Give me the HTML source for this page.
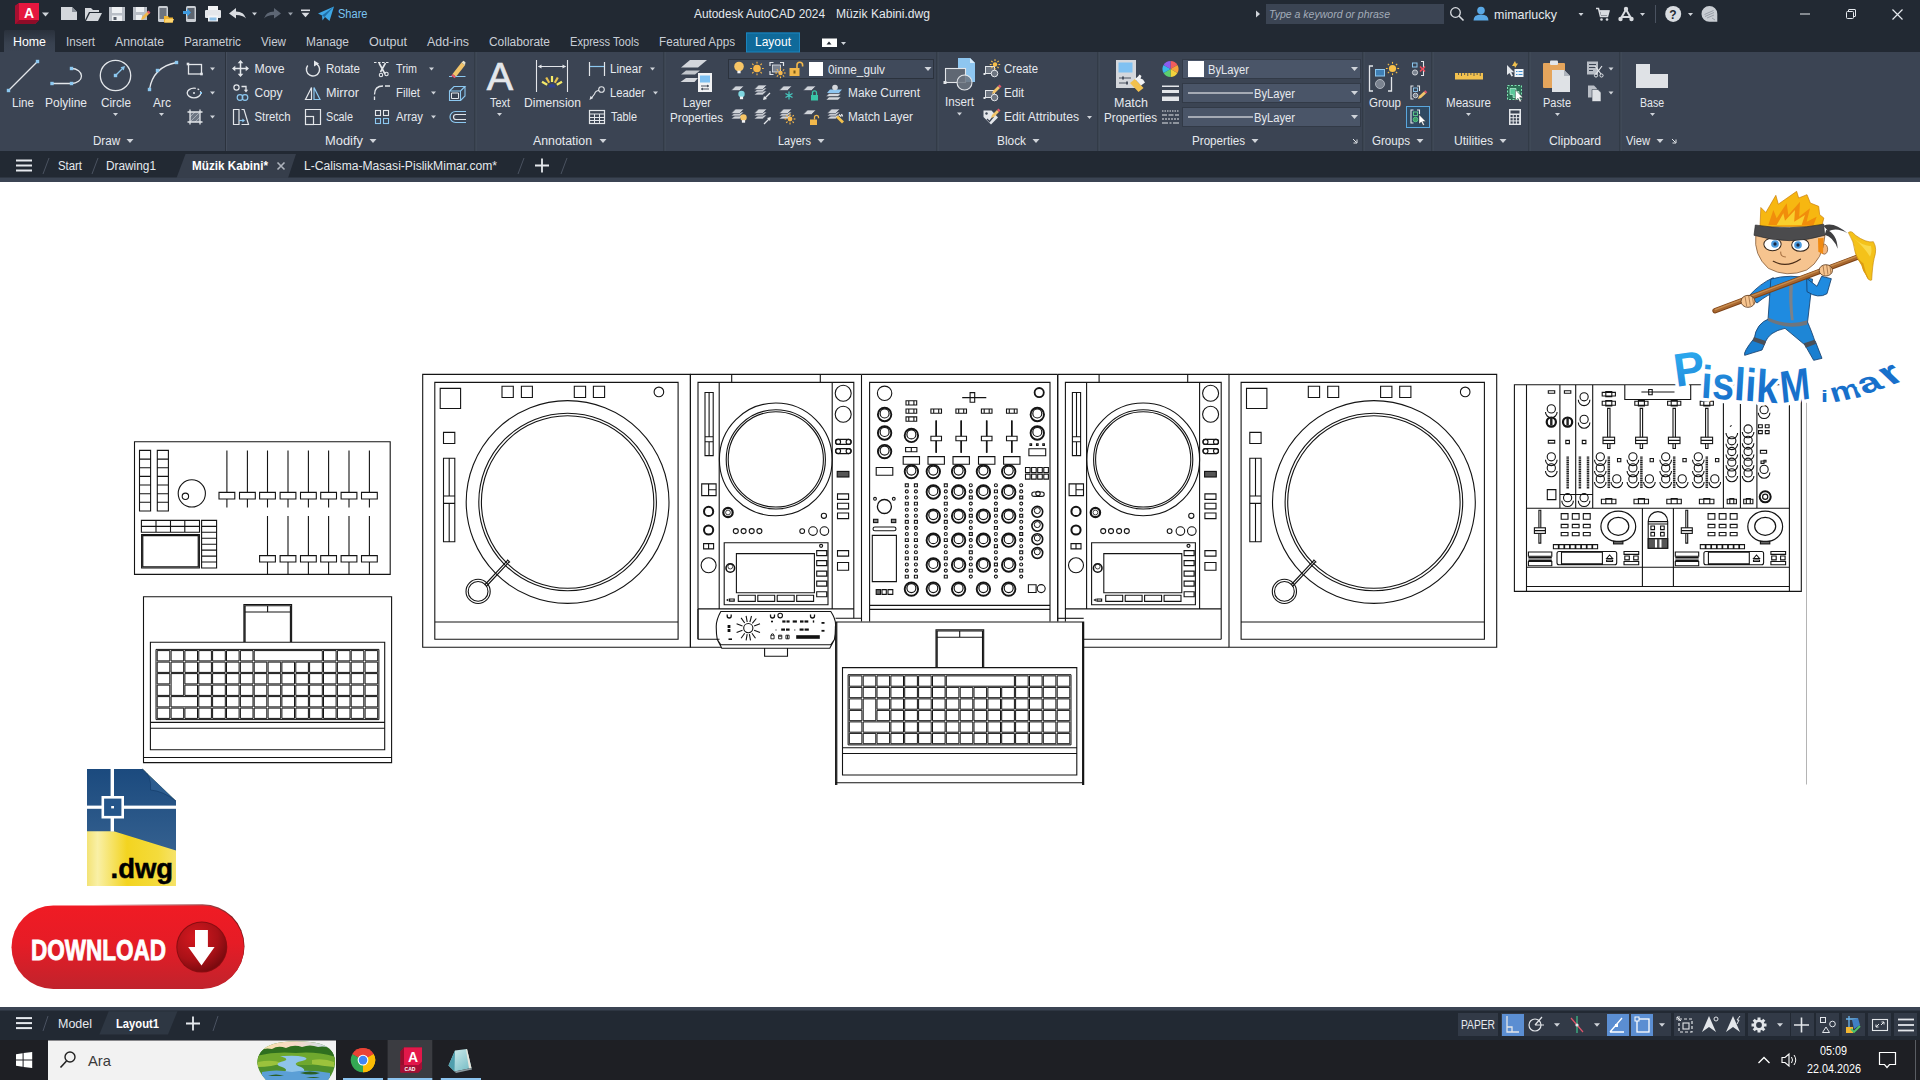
<!DOCTYPE html>
<html lang="tr"><head><meta charset="utf-8"><title>Autodesk AutoCAD 2024 - Müzik Kabini.dwg</title>
<style>
html,body{margin:0;padding:0;background:#fff;width:1920px;height:1080px;overflow:hidden}
svg{position:absolute;left:0;top:0;display:block}
text{font-family:"Liberation Sans",sans-serif;white-space:pre}
.t{font-size:12px;fill:#e6e9ee}
.d{fill:none;stroke:#000;stroke-width:1}
</style></head><body>
<svg width="1920" height="1080" viewBox="0 0 1920 1080">

<rect x="0" y="0" width="1920" height="182" fill="#222933"/>
<rect x="0" y="52" width="1920" height="99" fill="#3b4453"/>
<rect x="0" y="151" width="1920" height="27" fill="#222933"/>
<rect x="0" y="177.5" width="1920" height="4.5" fill="#3b4453"/>
<defs><linearGradient id="htg" x1="0" y1="0" x2="0" y2="1"><stop offset="0" stop-color="#2a313c"/><stop offset="0.600" stop-color="#38414f"/><stop offset="1" stop-color="#3b4453"/></linearGradient></defs><path d="M4,52V32q0,-2 2,-2H53q2,0 2,2V52z" fill="url(#htg)"/>
<rect x="746" y="32.5" width="54" height="19.5" fill="#0f6a9a"/>
<rect x="746.5" y="33" width="53" height="19" fill="none" stroke="#1b84bd" stroke-width="1"/>
<g><path d="M15,6l4,-3h20v17l-4,4h-20z" fill="#c8123c"/><path d="M19,3h20v17h-20z" fill="#e5173f"/><path d="M15,6l4,-3v17l-4,4z" fill="#a50f30"/><path d="M15,24l4,-4h20l-4,4z" fill="#8e0c28"/><text x="29" y="17.5" text-anchor="middle" style="font-size:14px;font-weight:bold;fill:#fff">A</text></g>
<path d="M42.0,12.5h7l-3.5,4z" fill="#d0d4da"/>
<path d="M61,7h11l5,5v8h-16z" fill="#d4d7dc"/><path d="M72,7v5h5z" fill="#8a9099"/>
<path d="M85,8h6l2,2h6v2h-10l-4,8z" fill="#d4d7dc"/><path d="M90,13h12l-4,8h-12z" fill="#d4d7dc"/>
<path d="M109,7h16v14h-16z" fill="#b9bec6"/><rect x="112" y="7" width="10" height="6" fill="#eef0f3"/><rect x="112" y="15.5" width="10" height="5.5" fill="#eef0f3"/><rect x="113.5" y="17" width="3" height="3" fill="#555c68"/>
<path d="M133,7h14v13h-14z" fill="#b9bec6"/><rect x="136" y="7" width="8" height="5" fill="#eef0f3"/><rect x="136" y="15" width="6" height="5" fill="#eef0f3"/><path d="M141,20l1,-3l6,-6l2,2l-6,6z" fill="#f0b64a"/><path d="M147,12l1.5,-1.5l2,2l-1.5,1.5z" fill="#e0566b"/>
<rect x="158" y="6" width="10" height="16" rx="1.5" fill="#c9cdd3"/><rect x="159.5" y="8" width="7" height="11" fill="#6d747f"/><path d="M164,16h4l1,1.5h4v5h-9z" fill="#f2b632"/><path d="M165.5,19h8.5l-1.5,3.5h-8z" fill="#ffd670"/>
<rect x="186" y="6" width="10" height="16" rx="1.5" fill="#c9cdd3"/><rect x="187.500" y="8" width="7" height="11" fill="#5d6570"/><path d="M183,11h4v-2.500l4,4l-4,4v-2.500h-4z" fill="#3f9be0"/>
<rect x="208" y="6" width="10" height="5" fill="#f3f4f6"/><rect x="205" y="10" width="16" height="8" rx="1" fill="#e4e6ea"/><rect x="208" y="15.500" width="10" height="6" fill="#f3f4f6"/><rect x="209.500" y="17.500" width="7" height="3" fill="#8ec0e8"/>
<path d="M229,13.500l7,-5.500v3.500q8,0 10,7q-3,-3.500 -10,-3.500v3.500z" fill="#d9dce1"/>
<path d="M252.0,12.5h5l-2.5,3z" fill="#d0d4da"/>
<path d="M281,13.500l-7,-5.500v3.500q-8,0 -10,7q3,-3.500 10,-3.500v3.500z" fill="#5d6674"/>
<path d="M288.0,12.5h5l-2.5,3z" fill="#9aa1ab"/>
<rect x="301" y="9.500" width="9" height="1.600" fill="#d9dce1"/>
<path d="M301.5,12.75h8l-4.0,4.5z" fill="#d9dce1"/>
<path d="M318,13.500l16,-7l-4.500,14.500l-4.500,-4l-2.500,3.500l-0.500,-5z" fill="#3ea7e6"/><path d="M322,15.500l12,-9l-9.500,10.500z" fill="#1f6fa8"/>
<text x="338" y="18.2" class="t" style="fill:#79c3f1;font-size:12px" textLength="29.500" lengthAdjust="spacingAndGlyphs">Share</text>
<text x="694" y="17.8" class="t" textLength="131" lengthAdjust="spacingAndGlyphs">Autodesk AutoCAD 2024</text>
<text x="836" y="17.8" class="t" textLength="94" lengthAdjust="spacingAndGlyphs">Müzik Kabini.dwg</text>
<path d="M1256,10.500l4,3.500l-4,3.500z" fill="#d0d4da"/>
<rect x="1266" y="4" width="178" height="20" fill="#3b4453"/>
<text x="1269" y="18" class="t" style="font-style:italic;fill:#a3acb9;font-size:11px" textLength="121" lengthAdjust="spacingAndGlyphs">Type a keyword or phrase</text>
<circle cx="1455.500" cy="12.500" r="4.800" fill="none" stroke="#d9dce1" stroke-width="1.300"/><path d="M1459,16l4.500,4.500" stroke="#d9dce1" stroke-width="1.600"/>
<circle cx="1481" cy="10.500" r="3.800" fill="#5aa9e6"/><path d="M1473.500,20.500q0,-6 7.500,-6t7.500,6z" fill="#5aa9e6"/>
<text x="1494" y="18.5" class="t" style="font-size:13px" textLength="63" lengthAdjust="spacingAndGlyphs">mimarlucky</text>
<path d="M1578.5,13.0h5l-2.5,3z" fill="#d0d4da"/>
<path d="M1596,8.500h2.500l2,8h7l1.500,-5.500h-9.500" fill="none" stroke="#d9dce1" stroke-width="1.500"/><circle cx="1601.500" cy="19.500" r="1.300" fill="#d9dce1"/><circle cx="1607" cy="19.500" r="1.300" fill="#d9dce1"/><path d="M1600,10.500h9l-1.200,5h-6.600z" fill="#d9dce1"/>
<path d="M1626,9.500l-5.500,9.500M1626,9.500l5.500,9.500M1621.500,17h9" stroke="#d9dce1" stroke-width="2" fill="none"/><circle cx="1626" cy="9" r="2.200" fill="#d9dce1"/><circle cx="1620.500" cy="19" r="2.200" fill="#d9dce1"/><circle cx="1631.500" cy="19" r="2.200" fill="#d9dce1"/>
<path d="M1640.0,13.0h5l-2.5,3z" fill="#d0d4da"/>
<rect x="1655" y="5" width="1" height="18" fill="#4a5260"/>
<circle cx="1673.200" cy="13.900" r="8" fill="#d9dce1"/><text x="1673" y="18.500" text-anchor="middle" style="font-size:12px;font-weight:bold;fill:#222933">?</text>
<path d="M1688.0,13.0h5l-2.5,3z" fill="#d0d4da"/>
<path d="M1717.300,13.900a7.900,7.900 0 1 0 -7.900,7.900h7.900z" fill="#c9cdd3"/><path d="M1704.500,14.500l9,-4M1705,16.500l9,-4M1707,18l7,-3M1712,18l3,2" stroke="#8b929c" stroke-width="0.800"/>
<rect x="1800" y="13.500" width="10" height="1" fill="#e6e9ee"/>
<rect x="1846.500" y="11.500" width="7" height="7" rx="1" fill="none" stroke="#e6e9ee"/><path d="M1848.500,11.500v-1.500q0,-0.500 0.500,-0.500h6q0.500,0 0.500,0.500v6q0,0.500 -0.500,0.500h-1.500" fill="none" stroke="#e6e9ee"/>
<path d="M1892.500,9.500l10,10M1902.500,9.500l-10,10" stroke="#e6e9ee" stroke-width="1.200"/>
<text x="13" y="46" class="t" style="fill:#ffffff" textLength="33" lengthAdjust="spacingAndGlyphs">Home</text>
<text x="66" y="46" class="t" style="fill:#c9ced6" textLength="29" lengthAdjust="spacingAndGlyphs">Insert</text>
<text x="115" y="46" class="t" style="fill:#c9ced6" textLength="49" lengthAdjust="spacingAndGlyphs">Annotate</text>
<text x="184" y="46" class="t" style="fill:#c9ced6" textLength="57" lengthAdjust="spacingAndGlyphs">Parametric</text>
<text x="261" y="46" class="t" style="fill:#c9ced6" textLength="25" lengthAdjust="spacingAndGlyphs">View</text>
<text x="306" y="46" class="t" style="fill:#c9ced6" textLength="43" lengthAdjust="spacingAndGlyphs">Manage</text>
<text x="369" y="46" class="t" style="fill:#c9ced6" textLength="38" lengthAdjust="spacingAndGlyphs">Output</text>
<text x="427" y="46" class="t" style="fill:#c9ced6" textLength="42" lengthAdjust="spacingAndGlyphs">Add-ins</text>
<text x="489" y="46" class="t" style="fill:#c9ced6" textLength="61" lengthAdjust="spacingAndGlyphs">Collaborate</text>
<text x="570" y="46" class="t" style="fill:#c9ced6" textLength="69" lengthAdjust="spacingAndGlyphs">Express Tools</text>
<text x="659" y="46" class="t" style="fill:#c9ced6" textLength="76" lengthAdjust="spacingAndGlyphs">Featured Apps</text>
<text x="755" y="46" class="t" style="fill:#ffffff" textLength="36" lengthAdjust="spacingAndGlyphs">Layout</text>
<rect x="822" y="38.500" width="15" height="8.500" fill="#ffffff"/><path d="M826.500,44.500l2.500,-3l2.500,3z" fill="#222933"/>
<path d="M841.0,42.0h5l-2.5,3z" fill="#d0d4da"/>
<path d="M176.500,178L185.500,154H296L288,178z" fill="#363e4b"/>
<rect x="16" y="159.5" width="16" height="2" fill="#e6e9ee"/>
<rect x="16" y="164.5" width="16" height="2" fill="#e6e9ee"/>
<rect x="16" y="169.5" width="16" height="2" fill="#e6e9ee"/>
<path d="M43,174l6,-16" stroke="#4a5260" stroke-width="1"/>
<path d="M92,174l6,-16" stroke="#4a5260" stroke-width="1"/>
<path d="M518,174l6,-16" stroke="#4a5260" stroke-width="1"/>
<path d="M561,174l6,-16" stroke="#4a5260" stroke-width="1"/>
<text x="58" y="170" class="t" textLength="24" lengthAdjust="spacingAndGlyphs">Start</text>
<text x="106" y="170" class="t" textLength="50" lengthAdjust="spacingAndGlyphs">Drawing1</text>
<text x="192" y="170" class="t" style="font-weight:bold;fill:#fff" textLength="76" lengthAdjust="spacingAndGlyphs">Müzik Kabini*</text>
<path d="M277.500,162.500l7,7M284.500,162.500l-7,7" stroke="#aeb4bd" stroke-width="1.600"/>
<text x="304" y="170" class="t" textLength="193" lengthAdjust="spacingAndGlyphs">L-Calisma-Masasi-PislikMimar.com*</text>
<path d="M535,165.500h14M542,158.500v14" stroke="#e6e9ee" stroke-width="1.800"/>
<path d="M8.500,90.500L37.500,61.500" stroke="#e3e6ea" stroke-width="1.300"/><rect x="6.8" y="88.8" width="3.4" height="3.4" fill="#8cc8f0"/><rect x="35.8" y="59.8" width="3.4" height="3.4" fill="#8cc8f0"/>
<path d="M52,83.500H71.500M71.500,68.500a10,7.500 0 0 1 0,15" stroke="#e3e6ea" stroke-width="1.300" fill="none"/><rect x="50.3" y="81.8" width="3.4" height="3.4" fill="#8cc8f0"/><rect x="69.8" y="81.8" width="3.4" height="3.4" fill="#8cc8f0"/><rect x="69.8" y="66.8" width="3.4" height="3.4" fill="#8cc8f0"/>
<circle cx="115.500" cy="75.500" r="15.200" fill="none" stroke="#e3e6ea" stroke-width="1.300"/><path d="M115.500,75.500L123.500,67.500" stroke="#8cc8f0" stroke-width="1.300"/><path d="M125,66l-4.500,1.200l3.300,3.300z" fill="#8cc8f0"/><rect x="113.8" y="73.8" width="3.4" height="3.4" fill="#8cc8f0"/>
<path d="M149.500,89.500Q153,67 176.500,62.500" stroke="#e3e6ea" stroke-width="1.300" fill="none"/><rect x="147.8" y="87.8" width="3.4" height="3.4" fill="#8cc8f0"/><rect x="155.8" y="68.8" width="3.4" height="3.4" fill="#8cc8f0"/><rect x="174.8" y="60.8" width="3.4" height="3.4" fill="#8cc8f0"/>
<rect x="188.500" y="64.500" width="13" height="9.500" fill="none" stroke="#e3e6ea" stroke-width="1.300"/><rect x="186.7" y="62.7" width="2.6" height="2.6" fill="#e3e6ea"/><rect x="200.2" y="72.7" width="2.6" height="2.6" fill="#e3e6ea"/>
<path d="M194,88.200a6.800,4.800 0 1 0 6.800,4.800" fill="none" stroke="#e3e6ea" stroke-width="1.300"/><path d="M194,88.200a6.800,4.800 0 0 1 6.800,4.800" fill="none" stroke="#e3e6ea" stroke-width="1.300" stroke-dasharray="1.800 1.800"/><circle cx="194" cy="93" r="1" fill="#e3e6ea"/><rect x="200.0" y="92.0" width="2" height="2" fill="#8cc8f0"/>
<rect x="190" y="112" width="10" height="10" fill="#6d7683"/><path d="M190,117l5,-5M190,122l10,-10M195,122l5,-5" stroke="#aab1bb" stroke-width="0.900"/><path d="M187.500,112h15M187.500,122h15M190,109.500v15M200,109.500v15" stroke="#e3e6ea" stroke-width="1.300"/>
<path d="M210.0,67.5h5l-2.5,3z" fill="#d0d4da"/>
<path d="M210.0,91.5h5l-2.5,3z" fill="#d0d4da"/>
<path d="M210.0,115.5h5l-2.5,3z" fill="#d0d4da"/>
<text x="12" y="106.5" class="t" textLength="22" lengthAdjust="spacingAndGlyphs" >Line</text>
<text x="45" y="106.5" class="t" textLength="42" lengthAdjust="spacingAndGlyphs" >Polyline</text>
<text x="101" y="106.5" class="t" textLength="30" lengthAdjust="spacingAndGlyphs" >Circle</text>
<text x="153" y="106.5" class="t" textLength="18" lengthAdjust="spacingAndGlyphs" >Arc</text>
<path d="M113.0,113.0h5l-2.5,3z" fill="#d0d4da"/>
<path d="M159.0,113.0h5l-2.5,3z" fill="#d0d4da"/>
<text x="93" y="144.5" class="t" textLength="27" lengthAdjust="spacingAndGlyphs" >Draw</text>
<path d="M126.5,139.0h7l-3.5,4z" fill="#d0d4da"/>
<rect x="225" y="52" width="1" height="99" fill="#2b323d"/><rect x="226" y="52" width="1" height="99" fill="#454e5d"/>
<path d="M233.500,68.500h14M240.500,61.500v14" stroke="#e3e6ea" stroke-width="1.500"/><path d="M240.500,60l-2.800,3.300h5.600zM240.500,77l-2.800,-3.300h5.600zM232,68.500l3.300,-2.800v5.600zM249,68.500l-3.300,-2.800v5.600z" fill="#e3e6ea"/>
<text x="254.5" y="72.5" class="t" textLength="30" lengthAdjust="spacingAndGlyphs" >Move</text>
<circle cx="236.500" cy="87.500" r="2.600" fill="none" stroke="#e3e6ea" stroke-width="1.200"/><path d="M241.500,86.500h4.500v4" stroke="#e3e6ea" stroke-width="1.300" fill="none"/><path d="M246,92.500l-2.200,-2.700h4.400z" fill="#e3e6ea"/><circle cx="240" cy="97.500" r="2.800" fill="none" stroke="#8cc8f0" stroke-width="1.200"/><circle cx="245" cy="97.500" r="2.800" fill="none" stroke="#8cc8f0" stroke-width="1.200"/>
<text x="254.5" y="96.5" class="t" textLength="28" lengthAdjust="spacingAndGlyphs" >Copy</text>
<path d="M233.500,109.500h5.500v15h-5.500zM241.500,109.500h2.500l4.500,15h-7" stroke="#e3e6ea" stroke-width="1.200" fill="none"/><path d="M239,120.500h4" stroke="#8cc8f0" stroke-width="1.200"/><path d="M245,120.500l-2.600,-2v4z" fill="#8cc8f0"/>
<text x="254.5" y="120.5" class="t" textLength="36" lengthAdjust="spacingAndGlyphs" >Stretch</text>
<path d="M314.500,63a6.600,6.600 0 1 1 -6.800,2.500" stroke="#e3e6ea" stroke-width="1.400" fill="none"/><path d="M319,63.500l-5,-3v6z" fill="#e3e6ea"/>
<text x="326" y="72.5" class="t" textLength="34" lengthAdjust="spacingAndGlyphs" >Rotate</text>
<path d="M311.500,87.500v12h-6z" stroke="#e3e6ea" stroke-width="1.200" fill="none"/><path d="M314,87.500v12h6z" stroke="#8cc8f0" stroke-width="1.200" fill="none"/>
<text x="326" y="96.5" class="t" textLength="33" lengthAdjust="spacingAndGlyphs" >Mirror</text>
<path d="M305.500,116v-6.500h15v15h-6.500" stroke="#e3e6ea" stroke-width="1.200" fill="none"/><rect x="305.500" y="116.500" width="8" height="8" stroke="#e3e6ea" stroke-width="1.200" fill="none"/>
<text x="326" y="120.5" class="t" textLength="27" lengthAdjust="spacingAndGlyphs" >Scale</text>
<path d="M374,62.500h16" stroke="#e3e6ea" stroke-width="1.200" stroke-dasharray="2.500 1.500"/><path d="M379,63l6,11M385.500,63l-5,9" stroke="#e3e6ea" stroke-width="1.600"/><circle cx="381" cy="75" r="1.700" fill="none" stroke="#e3e6ea" stroke-width="1.100"/><circle cx="386.500" cy="74" r="1.700" fill="none" stroke="#e3e6ea" stroke-width="1.100"/>
<text x="396" y="72.5" class="t" textLength="21" lengthAdjust="spacingAndGlyphs" >Trim</text>
<path d="M429.0,67.5h5l-2.5,3z" fill="#d0d4da"/>
<path d="M374.500,100v-3.500M374.500,94.500q0,-8.500 8.500,-8.500M385,86h5" stroke="#e3e6ea" stroke-width="1.300" fill="none"/>
<text x="396" y="96.5" class="t" textLength="24" lengthAdjust="spacingAndGlyphs" >Fillet</text>
<path d="M431.0,91.5h5l-2.5,3z" fill="#d0d4da"/>
<rect x="375.5" y="110.5" width="5" height="5" fill="none" stroke="#e3e6ea" stroke-width="1.100"/>
<rect x="383.5" y="110.5" width="5" height="5" fill="none" stroke="#e3e6ea" stroke-width="1.100"/>
<rect x="375.5" y="118.5" width="5" height="5" fill="none" stroke="#8cc8f0" stroke-width="1.100"/>
<rect x="383.5" y="118.5" width="5" height="5" fill="none" stroke="#8cc8f0" stroke-width="1.100"/>
<text x="396" y="120.5" class="t" textLength="27" lengthAdjust="spacingAndGlyphs" >Array</text>
<path d="M431.0,115.5h5l-2.5,3z" fill="#d0d4da"/>
<path d="M452.500,74l9,-11.500l3.500,2.700l-9,11.500z" fill="#f2c46a"/><path d="M461.500,62.500l2,-1.700l2,1.500l-0.500,2.900z" fill="#e9e2c9"/><path d="M452.500,74l3.500,2.700l-1.300,1.500l-3.500,-2.500z" fill="#e4566c"/><path d="M449,76.500h3M455.500,76.500h10" stroke="#8cc8f0" stroke-width="1"/>
<path d="M449.500,91h11v9.500h-11zM449.500,91l4.500,-4.500h11l-4.500,4.500M465,86.500v9.500l-4.500,4.500" stroke="#8cc8f0" stroke-width="1.100" fill="none"/><path d="M451.500,93h7v5.500h-7z" stroke="#e3e6ea" stroke-width="1" fill="none"/>
<path d="M466,111.500h-10.500a5.500,5.500 0 0 0 0,11h10.500" stroke="#8cc8f0" stroke-width="1.200" fill="none"/><path d="M466,114.500h-10a2.500,2.500 0 0 0 0,5h10" stroke="#e3e6ea" stroke-width="1.200" fill="none"/>
<text x="325" y="144.5" class="t" textLength="38" lengthAdjust="spacingAndGlyphs" >Modify</text>
<path d="M369.5,139.0h7l-3.5,4z" fill="#d0d4da"/>
<rect x="474.5" y="52" width="1" height="99" fill="#2b323d"/><rect x="475.5" y="52" width="1" height="99" fill="#454e5d"/>
<text x="500" y="90" text-anchor="middle" style="font-size:39.500px;fill:#e3e6ea;stroke:#e3e6ea;stroke-width:0.7px">A</text>
<text x="490" y="106.5" class="t" textLength="20" lengthAdjust="spacingAndGlyphs" >Text</text>
<path d="M497.0,113.0h5l-2.5,3z" fill="#d0d4da"/>
<path d="M536.500,60v32M567.500,60v32M538.500,66.500h27" stroke="#e3e6ea" stroke-width="1.100"/><path d="M538,66.500l3.500,-2v4zM566,66.500l-3.500,-2v4z" fill="#e3e6ea"/>
<path d="M547.2,84.8L542.0,81.8" stroke="#f4e96a" stroke-width="2.200"/>
<path d="M549.2,82.7L546.2,77.5" stroke="#e8c24e" stroke-width="2.200"/>
<path d="M552.0,82.0L552.0,76.0" stroke="#f4e96a" stroke-width="2.200"/>
<path d="M554.8,82.7L557.8,77.5" stroke="#e8c24e" stroke-width="2.200"/>
<path d="M556.8,84.8L562.0,81.8" stroke="#f4e96a" stroke-width="2.200"/>
<path d="M548.500,87.500a3.500,3.500 0 0 1 7,0z" fill="#2f3f8f"/>
<text x="524" y="106.5" class="t" textLength="57" lengthAdjust="spacingAndGlyphs" >Dimension</text>
<path d="M589.500,62v14M604.500,62v14" stroke="#e3e6ea" stroke-width="1.200"/><path d="M590,66.500h14" stroke="#8cc8f0" stroke-width="1.200"/>
<text x="610" y="72.5" class="t" textLength="32" lengthAdjust="spacingAndGlyphs" >Linear</text>
<path d="M650.0,67.5h5l-2.5,3z" fill="#d0d4da"/>
<circle cx="601.500" cy="89.500" r="2.800" fill="none" stroke="#e3e6ea" stroke-width="1.100"/><path d="M599,90.500q-3.500,0 -4.500,3.500l-3,4" stroke="#e3e6ea" stroke-width="1.100" fill="none"/><path d="M589.500,100l1,-4l2.700,2z" fill="#e3e6ea"/>
<text x="610" y="96.5" class="t" textLength="35" lengthAdjust="spacingAndGlyphs" >Leader</text>
<path d="M653.0,91.5h5l-2.5,3z" fill="#d0d4da"/>
<rect x="589.500" y="110.500" width="15" height="13" fill="none" stroke="#e3e6ea" stroke-width="1.200"/><path d="M589.500,114h15M589.500,117.500h15M589.500,120.500h15M594.500,114v9.500M599.500,114v9.500" stroke="#e3e6ea" stroke-width="1"/>
<text x="611" y="120.5" class="t" textLength="26" lengthAdjust="spacingAndGlyphs" >Table</text>
<text x="533" y="144.5" class="t" textLength="59" lengthAdjust="spacingAndGlyphs" >Annotation</text>
<path d="M599.5,139.0h7l-3.5,4z" fill="#d0d4da"/>
<rect x="663.5" y="52" width="1" height="99" fill="#2b323d"/><rect x="664.5" y="52" width="1" height="99" fill="#454e5d"/>
<path d="M690,60h17l-9,7.500h-17z" fill="#d4d7dc"/><path d="M686,70.500h14l-5,4h-14z" fill="#c2c6cc"/><path d="M686,78h12l-3.500,4h-14z" fill="#d4d7dc"/><rect x="698" y="73" width="14" height="19" fill="#f1f2f4"/><rect x="700" y="75.500" width="10" height="7" fill="#7fc1f2"/><path d="M701,86h8M701,89h8" stroke="#4a5260" stroke-width="1"/><path d="M709,86l-2,-1.500v3zM701,89l2,-1.500v3z" fill="#4a5260"/>
<text x="683" y="106.5" class="t" textLength="28" lengthAdjust="spacingAndGlyphs" >Layer</text>
<text x="670" y="121.5" class="t" textLength="53" lengthAdjust="spacingAndGlyphs" >Properties</text>
<rect x="728.500" y="59.500" width="205" height="19" fill="#404a5b" stroke="#2b323d"/>
<circle cx="739" cy="66.5" r="4.8" fill="#f7c566"/><rect x="737.4" y="70.7" width="3.2" height="2.6" fill="#f4f4f4"/>
<circle cx="757" cy="68.5" r="3.8" fill="#f7b84a"/><path d="M762.0,68.5L763.8,68.5" stroke="#f7b84a" stroke-width="1.1"/><path d="M760.5,72.0L761.8,73.3" stroke="#f7b84a" stroke-width="1.1"/><path d="M757.0,73.5L757.0,75.3" stroke="#f7b84a" stroke-width="1.1"/><path d="M753.5,72.0L752.2,73.3" stroke="#f7b84a" stroke-width="1.1"/><path d="M752.0,68.5L750.2,68.5" stroke="#f7b84a" stroke-width="1.1"/><path d="M753.5,65.0L752.2,63.7" stroke="#f7b84a" stroke-width="1.1"/><path d="M757.0,63.5L757.0,61.7" stroke="#f7b84a" stroke-width="1.1"/><path d="M760.5,65.0L761.8,63.7" stroke="#f7b84a" stroke-width="1.1"/>
<path d="M770,66v-3.500h3.500M780,62.500h3.500v3.500M770,71v3.500h3.500" stroke="#e3e6ea" stroke-width="1.200" fill="none"/><rect x="772.500" y="65" width="8" height="7" fill="#7b8390" stroke="#e3e6ea" stroke-width="0.800"/><circle cx="780.5" cy="73" r="2.2" fill="#f7b84a"/><path d="M783.9,73.0L785.7,73.0" stroke="#f7b84a" stroke-width="1.1"/><path d="M782.9,75.4L784.2,76.7" stroke="#f7b84a" stroke-width="1.1"/><path d="M780.5,76.4L780.5,78.2" stroke="#f7b84a" stroke-width="1.1"/><path d="M778.1,75.4L776.8,76.7" stroke="#f7b84a" stroke-width="1.1"/><path d="M777.1,73.0L775.3,73.0" stroke="#f7b84a" stroke-width="1.1"/><path d="M778.1,70.6L776.8,69.3" stroke="#f7b84a" stroke-width="1.1"/><path d="M780.5,69.6L780.5,67.8" stroke="#f7b84a" stroke-width="1.1"/><path d="M782.9,70.6L784.2,69.3" stroke="#f7b84a" stroke-width="1.1"/>
<rect x="789.500" y="68" width="10" height="8" fill="#f2b84b"/><path d="M797,68v-3a2.800,2.800 0 0 1 5.600,0v1.500" fill="none" stroke="#f2b84b" stroke-width="1.600"/><rect x="793.500" y="70.500" width="2" height="3" fill="#7a5a16"/>
<rect x="809" y="62" width="14" height="14" fill="#ffffff"/>
<text x="828" y="73.5" class="t" textLength="57" lengthAdjust="spacingAndGlyphs" style="font-size:12.500px">0inne_gulv</text>
<path d="M924.5,67.0h7l-3.5,4z" fill="#d0d4da"/>
<path d="M735.5,86.0h8.5l-4.5,4.6h-8.5z" fill="#cfd3d9" stroke="#3b4453" stroke-width="0.7"/><circle cx="741.5" cy="94" r="3.2" fill="#7fd6e0"/><rect x="739.9" y="96.60000000000001" width="3.2" height="2.6" fill="#f4f4f4"/>
<path d="M758.5,91.0h8.5l-4.5,4.0h-8.5z" fill="#cfd3d9" stroke="#3b4453" stroke-width="0.7"/><path d="M758.5,88.0h8.5l-4.5,4.0h-8.5z" fill="#cfd3d9" stroke="#3b4453" stroke-width="0.7"/><path d="M758.5,85.0h8.5l-4.5,4.6h-8.5z" fill="#cfd3d9" stroke="#3b4453" stroke-width="0.7"/><path d="M770,93l-6,6" stroke="#e3e6ea" stroke-width="1.200"/><path d="M763,100l1,-4l3,3z" fill="#e3e6ea"/>
<path d="M783.5,86.0h8.5l-4.5,4.6h-8.5z" fill="#cfd3d9" stroke="#3b4453" stroke-width="0.7"/><path d="M789,91.500v8M785.500,93.500l7,4M792.500,93.500l-7,4" stroke="#46c9c0" stroke-width="1.200"/>
<path d="M807.5,86.0h8.5l-4.5,4.6h-8.5z" fill="#cfd3d9" stroke="#3b4453" stroke-width="0.7"/><rect x="811" y="95" width="7" height="5.5" fill="#39c6a8"/><path d="M812.5,95v-2.200a2,2 0 0 1 4,0v2.200" fill="none" stroke="#39c6a8" stroke-width="1.3"/>
<path d="M829,93.500h12l-3,3h-12zM829,97h12l-3,3h-12z" fill="#d4d7dc" stroke="#3b4453" stroke-width="0.500"/><path d="M830,89.500h12l-3,3.500h-12z" fill="#8ec6f0"/><circle cx="835" cy="87.500" r="2.800" fill="#d4d7dc"/>
<text x="848" y="96.5" class="t" textLength="72" lengthAdjust="spacingAndGlyphs" >Make Current</text>
<path d="M735.5,115.0h8.5l-4.5,4.0h-8.5z" fill="#cfd3d9" stroke="#3b4453" stroke-width="0.7"/><path d="M735.5,112.0h8.5l-4.5,4.0h-8.5z" fill="#cfd3d9" stroke="#3b4453" stroke-width="0.7"/><path d="M735.5,109.0h8.5l-4.5,4.6h-8.5z" fill="#cfd3d9" stroke="#3b4453" stroke-width="0.7"/><circle cx="743.5" cy="117.5" r="3.2" fill="#f7c566"/><rect x="741.9" y="120.10000000000001" width="3.2" height="2.6" fill="#f4f4f4"/>
<path d="M758.5,115.0h8.5l-4.5,4.0h-8.5z" fill="#cfd3d9" stroke="#3b4453" stroke-width="0.7"/><path d="M758.5,112.0h8.5l-4.5,4.0h-8.5z" fill="#cfd3d9" stroke="#3b4453" stroke-width="0.7"/><path d="M758.5,109.0h8.5l-4.5,4.6h-8.5z" fill="#cfd3d9" stroke="#3b4453" stroke-width="0.7"/><path d="M764,124l6,-6" stroke="#e3e6ea" stroke-width="1.200"/><path d="M771,117l-4,1l3,3z" fill="#e3e6ea"/>
<path d="M783.5,115.0h8.5l-4.5,4.0h-8.5z" fill="#cfd3d9" stroke="#3b4453" stroke-width="0.7"/><path d="M783.5,112.0h8.5l-4.5,4.0h-8.5z" fill="#cfd3d9" stroke="#3b4453" stroke-width="0.7"/><path d="M783.5,109.0h8.5l-4.5,4.6h-8.5z" fill="#cfd3d9" stroke="#3b4453" stroke-width="0.7"/><circle cx="790" cy="119" r="2.4" fill="#f7b84a"/><path d="M793.6,119.0L795.4,119.0" stroke="#f7b84a" stroke-width="1.1"/><path d="M792.5,121.5L793.8,122.8" stroke="#f7b84a" stroke-width="1.1"/><path d="M790.0,122.6L790.0,124.4" stroke="#f7b84a" stroke-width="1.1"/><path d="M787.5,121.5L786.2,122.8" stroke="#f7b84a" stroke-width="1.1"/><path d="M786.4,119.0L784.6,119.0" stroke="#f7b84a" stroke-width="1.1"/><path d="M787.5,116.5L786.2,115.2" stroke="#f7b84a" stroke-width="1.1"/><path d="M790.0,115.4L790.0,113.6" stroke="#f7b84a" stroke-width="1.1"/><path d="M792.5,116.5L793.8,115.2" stroke="#f7b84a" stroke-width="1.1"/>
<path d="M807.5,110.0h8.5l-4.5,4.6h-8.5z" fill="#cfd3d9" stroke="#3b4453" stroke-width="0.7"/><rect x="810" y="119.5" width="7" height="5.5" fill="#f2b84b"/><path d="M814.5,119.5v-2.2a2,2 0 0 1 4,0v1" fill="none" stroke="#f2b84b" stroke-width="1.3"/>
<path d="M831.5,115.0h8.5l-4.5,4.0h-8.5z" fill="#cfd3d9" stroke="#3b4453" stroke-width="0.7"/><path d="M831.5,112.0h8.5l-4.5,4.0h-8.5z" fill="#cfd3d9" stroke="#3b4453" stroke-width="0.7"/><path d="M831.5,109.0h8.5l-4.5,4.6h-8.5z" fill="#cfd3d9" stroke="#3b4453" stroke-width="0.7"/><path d="M836,117.500l6,6l2,-2l-6,-6z" fill="#f2c14e"/><path d="M839,114.500l2,2M841.500,114l1,2.500" stroke="#f4f4f4" stroke-width="1.300"/>
<text x="848" y="120.5" class="t" textLength="65" lengthAdjust="spacingAndGlyphs" >Match Layer</text>
<text x="778" y="144.5" class="t" textLength="33" lengthAdjust="spacingAndGlyphs" >Layers</text>
<path d="M817.5,139.0h7l-3.5,4z" fill="#d0d4da"/>
<rect x="936.5" y="52" width="1" height="99" fill="#2b323d"/><rect x="937.5" y="52" width="1" height="99" fill="#454e5d"/>
<path d="M958,58h12l5,5v19h-17z" fill="#8ec6f0"/><path d="M970,58v5h5z" fill="#d9ecfa"/><rect x="945.500" y="68.500" width="20" height="14" fill="#5f6773" stroke="#e3e6ea" stroke-width="1.100"/><circle cx="964.500" cy="82.500" r="7.500" fill="#6d7581" fill-opacity="0.850" stroke="#e3e6ea" stroke-width="1.100"/><rect x="943.500" y="81" width="3" height="3" fill="#e3e6ea"/>
<text x="945" y="106" class="t" textLength="29" lengthAdjust="spacingAndGlyphs" >Insert</text>
<path d="M957.0,112.5h5l-2.5,3z" fill="#d0d4da"/>
<rect x="985.500" y="66.5" width="9" height="7" fill="#6d7581" stroke="#e3e6ea" stroke-width="1"/><circle cx="994.500" cy="73.5" r="3.300" fill="#6d7581" stroke="#e3e6ea" stroke-width="1"/><rect x="983.500" y="73" width="2" height="2" fill="#e3e6ea"/>
<circle cx="995" cy="64.5" r="2.2" fill="#f7c04a"/><path d="M998.4,64.5L1000.2,64.5" stroke="#f7c04a" stroke-width="1.1"/><path d="M997.4,66.9L998.7,68.2" stroke="#f7c04a" stroke-width="1.1"/><path d="M995.0,67.9L995.0,69.7" stroke="#f7c04a" stroke-width="1.1"/><path d="M992.6,66.9L991.3,68.2" stroke="#f7c04a" stroke-width="1.1"/><path d="M991.6,64.5L989.8,64.5" stroke="#f7c04a" stroke-width="1.1"/><path d="M992.6,62.1L991.3,60.8" stroke="#f7c04a" stroke-width="1.1"/><path d="M995.0,61.1L995.0,59.3" stroke="#f7c04a" stroke-width="1.1"/><path d="M997.4,62.1L998.7,60.8" stroke="#f7c04a" stroke-width="1.1"/>
<rect x="985.500" y="90.5" width="9" height="7" fill="#6d7581" stroke="#e3e6ea" stroke-width="1"/><circle cx="994.500" cy="97.5" r="3.300" fill="#6d7581" stroke="#e3e6ea" stroke-width="1"/><rect x="983.500" y="97" width="2" height="2" fill="#e3e6ea"/>
<path d="M992,94l1,-3l5,-5l2,2l-5,5z" fill="#f2c46a"/><path d="M998,86l1.500,-1.500l2,2l-1.500,1.500z" fill="#e4566c"/>
<text x="1004" y="72.5" class="t" textLength="34" lengthAdjust="spacingAndGlyphs" >Create</text>
<text x="1004" y="96.5" class="t" textLength="20" lengthAdjust="spacingAndGlyphs" >Edit</text>
<path d="M983.500,110.500h8l6.500,7l-7,7l-7.500,-7.500z" fill="#e3e6ea"/><circle cx="986.500" cy="113.500" r="1.200" fill="#3b4453"/><path d="M987,119l2.500,2.500l4,-5" stroke="#3b4453" stroke-width="1.300" fill="none"/><path d="M991,118l1,-3l5,-5l2,2l-5,5z" fill="#f2c46a"/><path d="M997,110l1.500,-1.500l2,2l-1.500,1.500z" fill="#e4566c"/>
<text x="1004" y="120.5" class="t" textLength="75" lengthAdjust="spacingAndGlyphs" >Edit Attributes</text>
<path d="M1087.0,116.0h5l-2.5,3z" fill="#d0d4da"/>
<text x="997" y="144.5" class="t" textLength="29" lengthAdjust="spacingAndGlyphs" >Block</text>
<path d="M1032.5,139.0h7l-3.5,4z" fill="#d0d4da"/>
<rect x="1097.5" y="52" width="1" height="99" fill="#2b323d"/><rect x="1098.5" y="52" width="1" height="99" fill="#454e5d"/>
<rect x="1116" y="60" width="20" height="28" fill="#d4d7dc"/><rect x="1118.500" y="62.500" width="14" height="10" fill="#7fc1f2"/><path d="M1119,78h12M1119,83h9" stroke="#4a5260" stroke-width="1"/><rect x="1122" y="76.500" width="2" height="3" fill="#4a5260"/><rect x="1126" y="81.500" width="2" height="3" fill="#4a5260"/><path d="M1130,83l5,-4l8.500,9l-5,4z" fill="#f2c14e"/><path d="M1135,79l3,-2.500l1.500,-2l2,1.500l-1,2.500l2.500,1l2,3l-4,3z" fill="#f1f2f4"/>
<text x="1114" y="106.5" class="t" textLength="34" lengthAdjust="spacingAndGlyphs" >Match</text>
<text x="1104" y="121.5" class="t" textLength="53" lengthAdjust="spacingAndGlyphs" >Properties</text>
<path d="M1170.500,69L1170.50,61.00A8,8 0 0 1 1177.43,65.00z" fill="#f25c5c"/>
<path d="M1170.500,69L1177.43,65.00A8,8 0 0 1 1177.43,73.00z" fill="#f7a23a"/>
<path d="M1170.500,69L1177.43,73.00A8,8 0 0 1 1170.50,77.00z" fill="#f2d23c"/>
<path d="M1170.500,69L1170.50,77.00A8,8 0 0 1 1163.57,73.00z" fill="#5ccf6e"/>
<path d="M1170.500,69L1163.57,73.00A8,8 0 0 1 1163.57,65.00z" fill="#39b8e8"/>
<path d="M1170.500,69L1163.57,65.00A8,8 0 0 1 1170.50,61.00z" fill="#8a5cf0"/>
<rect x="1162" y="85.500" width="17" height="1.500" fill="#e3e6ea"/><rect x="1162" y="90" width="17" height="3" fill="#e3e6ea"/><rect x="1162" y="96.500" width="17" height="4.500" fill="#e3e6ea"/>
<path d="M1162,111h17" stroke="#e3e6ea" stroke-width="1.200" stroke-dasharray="1.500 1"/><path d="M1162,115h17" stroke="#e3e6ea" stroke-width="1.200" stroke-dasharray="5 1.500"/><path d="M1162,119h17" stroke="#e3e6ea" stroke-width="1.200" stroke-dasharray="2 1"/><path d="M1162,123h17" stroke="#e3e6ea" stroke-width="1.200" stroke-dasharray="6 1.500 2 1.500"/>
<rect x="1182.500" y="59.5" width="178" height="19" fill="#4a5568" stroke="#323a47"/>
<path d="M1351.0,67.0h7l-3.5,4z" fill="#d0d4da"/>
<rect x="1182.500" y="83.5" width="178" height="19" fill="#4a5568" stroke="#323a47"/>
<path d="M1351.0,91.0h7l-3.5,4z" fill="#d0d4da"/>
<rect x="1182.500" y="107.5" width="178" height="19" fill="#4a5568" stroke="#323a47"/>
<path d="M1351.0,115.0h7l-3.5,4z" fill="#d0d4da"/>
<rect x="1188" y="61" width="16" height="16" fill="#ffffff"/>
<text x="1208" y="73.5" class="t" textLength="41" lengthAdjust="spacingAndGlyphs" style="font-size:12.500px">ByLayer</text>
<rect x="1188" y="92.5" width="65" height="1" fill="#ffffff"/>
<text x="1254" y="97.5" class="t" textLength="41" lengthAdjust="spacingAndGlyphs" style="font-size:12.500px">ByLayer</text>
<rect x="1188" y="116.5" width="65" height="1" fill="#ffffff"/>
<text x="1254" y="121.5" class="t" textLength="41" lengthAdjust="spacingAndGlyphs" style="font-size:12.500px">ByLayer</text>
<text x="1192" y="144.5" class="t" textLength="53" lengthAdjust="spacingAndGlyphs" >Properties</text>
<path d="M1251.5,139.0h7l-3.5,4z" fill="#d0d4da"/>
<path d="M1353,139l3.500,3.500M1357,139.500v3.500h-3.500" stroke="#e3e6ea" stroke-width="1" fill="none"/>
<rect x="1362.5" y="52" width="1" height="99" fill="#2b323d"/><rect x="1363.5" y="52" width="1" height="99" fill="#454e5d"/>
<path d="M1373,66h-3.500v25h3.500M1388,91h3.500v-14" stroke="#e3e6ea" stroke-width="1.300" fill="none"/><rect x="1375.500" y="69.500" width="9" height="6.500" fill="#3f7fb5" stroke="#8cc8f0" stroke-width="1"/><circle cx="1380" cy="84" r="4.500" fill="#7b8390" stroke="#aab1bb" stroke-width="1"/><circle cx="1392.5" cy="68.5" r="3.6" fill="#f7c04a"/><path d="M1397.3,68.5L1399.1,68.5" stroke="#f7c04a" stroke-width="1.1"/><path d="M1395.9,71.9L1397.2,73.2" stroke="#f7c04a" stroke-width="1.1"/><path d="M1392.5,73.3L1392.5,75.1" stroke="#f7c04a" stroke-width="1.1"/><path d="M1389.1,71.9L1387.8,73.2" stroke="#f7c04a" stroke-width="1.1"/><path d="M1387.7,68.5L1385.9,68.5" stroke="#f7c04a" stroke-width="1.1"/><path d="M1389.1,65.1L1387.8,63.8" stroke="#f7c04a" stroke-width="1.1"/><path d="M1392.5,63.7L1392.5,61.9" stroke="#f7c04a" stroke-width="1.1"/><path d="M1395.9,65.1L1397.2,63.8" stroke="#f7c04a" stroke-width="1.1"/>
<text x="1369" y="106.5" class="t" textLength="32" lengthAdjust="spacingAndGlyphs" >Group</text>
<rect x="1412.500" y="63" width="4.500" height="4" fill="none" stroke="#8cc8f0" stroke-width="1"/><circle cx="1415" cy="72.500" r="2.600" fill="#7b8390" stroke="#e3e6ea" stroke-width="0.800"/><path d="M1421,61.500h2.500v14h-2.500" stroke="#e3e6ea" stroke-width="1.100" fill="none"/><path d="M1420,66.500l5,5M1425,66.500l-5,5" stroke="#ef4a5a" stroke-width="1.600"/>
<path d="M1413.500,86h-2.500v13h2.500M1417,86h2.500v5" stroke="#e3e6ea" stroke-width="1.100" fill="none"/><rect x="1413.500" y="88" width="4" height="3.500" fill="none" stroke="#8cc8f0" stroke-width="0.900"/><circle cx="1415.500" cy="95.500" r="2.300" fill="#7b8390" stroke="#e3e6ea" stroke-width="0.800"/><path d="M1418,99l1,-3l5,-4.500l2,2l-5,4.500z" fill="#f2c46a"/><path d="M1424,91.500l1.300,-1.200l2,2l-1.300,1.200z" fill="#e4566c"/>
<rect x="1406.500" y="106.500" width="23" height="21" fill="#2f4a63" stroke="#5aa7dd"/>
<path d="M1413.500,110h-2.500v13h2.500M1417,110h2.500v4" stroke="#e3e6ea" stroke-width="1.100" fill="none"/><rect x="1413.500" y="112" width="4" height="3.500" fill="none" stroke="#5fd08a" stroke-width="0.900"/><circle cx="1415.500" cy="119.500" r="2.300" fill="#3f9d68" stroke="#5fd08a" stroke-width="0.800"/><path d="M1419,114.500v9.500l2.300,-2l1.700,3.500l1.500,-0.700l-1.700,-3.300h3z" fill="#ffffff" stroke="#222" stroke-width="0.400"/>
<text x="1372" y="144.5" class="t" textLength="38" lengthAdjust="spacingAndGlyphs" >Groups</text>
<path d="M1416.5,139.0h7l-3.5,4z" fill="#d0d4da"/>
<rect x="1431.5" y="52" width="1" height="99" fill="#2b323d"/><rect x="1432.5" y="52" width="1" height="99" fill="#454e5d"/>
<rect x="1455" y="73" width="28" height="6.500" fill="#f2c14e"/>
<rect x="1458.1" y="73" width="0.800" height="2" fill="#3b4453"/>
<rect x="1461.2" y="73" width="0.800" height="3" fill="#3b4453"/>
<rect x="1464.3" y="73" width="0.800" height="2" fill="#3b4453"/>
<rect x="1467.4" y="73" width="0.800" height="3" fill="#3b4453"/>
<rect x="1470.5" y="73" width="0.800" height="2" fill="#3b4453"/>
<rect x="1473.6" y="73" width="0.800" height="3" fill="#3b4453"/>
<rect x="1476.7" y="73" width="0.800" height="2" fill="#3b4453"/>
<rect x="1479.8" y="73" width="0.800" height="3" fill="#3b4453"/>
<text x="1446" y="106.5" class="t" textLength="45" lengthAdjust="spacingAndGlyphs" >Measure</text>
<path d="M1466.0,113.0h5l-2.5,3z" fill="#d0d4da"/>
<path d="M1507,65v10l2.500,-2l2,3.500l1.500,-0.800l-1.800,-3.400h3z" fill="#e3e6ea"/><path d="M1512,66l3,-5l1,2.500h2l-3,4.500l-0.500,-2z" fill="#f2c14e"/><rect x="1514.500" y="69" width="9" height="8" fill="#eef2f6"/><path d="M1516,71.500h1.500M1518.500,71.500h4M1516,74.500h1.500M1518.500,74.500h4" stroke="#3f8fd0" stroke-width="1.100"/>
<rect x="1507.500" y="85.500" width="14" height="14" fill="#2c6f55" stroke="#7fe0b0" stroke-width="1" stroke-dasharray="2 1.500"/><path d="M1510,88.500h6v3h3v6h-6v-3h-3z" fill="#5bc79a" stroke="#b9f2d8" stroke-width="0.700"/><path d="M1515.500,90v10.500l2.500,-2.200l1.800,3.700l1.600,-0.800l-1.800,-3.600h3.200z" fill="#ffffff" stroke="#333" stroke-width="0.400"/>
<rect x="1509" y="109" width="12" height="16" fill="#e3e6ea"/><rect x="1510.500" y="110.500" width="9" height="3" fill="#3b4453"/>
<rect x="1510.5" y="115.0" width="2.200" height="2.200" fill="#3b4453"/>
<rect x="1513.7" y="115.0" width="2.200" height="2.200" fill="#3b4453"/>
<rect x="1516.9" y="115.0" width="2.200" height="2.200" fill="#3b4453"/>
<rect x="1510.5" y="118.2" width="2.200" height="2.200" fill="#3b4453"/>
<rect x="1513.7" y="118.2" width="2.200" height="2.200" fill="#3b4453"/>
<rect x="1516.9" y="118.2" width="2.200" height="2.200" fill="#3b4453"/>
<rect x="1510.5" y="121.4" width="2.200" height="2.200" fill="#3b4453"/>
<rect x="1513.7" y="121.4" width="2.200" height="2.200" fill="#3b4453"/>
<rect x="1516.9" y="121.4" width="2.200" height="2.200" fill="#3b4453"/>
<text x="1454" y="144.5" class="t" textLength="39" lengthAdjust="spacingAndGlyphs" >Utilities</text>
<path d="M1499.5,139.0h7l-3.5,4z" fill="#d0d4da"/>
<rect x="1528.5" y="52" width="1" height="99" fill="#2b323d"/><rect x="1529.5" y="52" width="1" height="99" fill="#454e5d"/>
<rect x="1543" y="63" width="22" height="25" rx="1" fill="#e5a55c"/><rect x="1550" y="60.500" width="8" height="4.500" rx="1" fill="#e3e6ea"/><path d="M1552,70h12l6,6v16h-18z" fill="#dfe2e6"/><path d="M1564,70v6h6z" fill="#aeb4bd"/>
<text x="1543" y="106.5" class="t" textLength="28" lengthAdjust="spacingAndGlyphs" >Paste</text>
<path d="M1555.0,113.0h5l-2.5,3z" fill="#d0d4da"/>
<rect x="1587" y="61.500" width="11" height="13" fill="#b9bec6"/><path d="M1589,64.500h7M1589,67.500h7M1589,70.500h4" stroke="#3b4453" stroke-width="1"/><path d="M1595,66l6,8M1602,66l-6,8" stroke="#e3e6ea" stroke-width="1.200"/><circle cx="1596" cy="75.500" r="1.600" fill="none" stroke="#e3e6ea" stroke-width="1"/><circle cx="1601.500" cy="75.500" r="1.600" fill="none" stroke="#e3e6ea" stroke-width="1"/>
<path d="M1608.5,67.5h5l-2.5,3z" fill="#d0d4da"/>
<path d="M1588,85.500h6l3,3v9h-9z" fill="#b9bec6"/><path d="M1592,89.500h6l3,3v9h-9z" fill="#dfe2e6" stroke="#3b4453" stroke-width="0.600"/>
<path d="M1608.5,91.5h5l-2.5,3z" fill="#d0d4da"/>
<text x="1549" y="144.5" class="t" textLength="52" lengthAdjust="spacingAndGlyphs" >Clipboard</text>
<rect x="1619.5" y="52" width="1" height="99" fill="#2b323d"/><rect x="1620.5" y="52" width="1" height="99" fill="#454e5d"/>
<path d="M1636,64h14v10h18v14h-32z" fill="#dfe2e6"/>
<text x="1640" y="106.5" class="t" textLength="24" lengthAdjust="spacingAndGlyphs" >Base</text>
<path d="M1650.0,113.0h5l-2.5,3z" fill="#d0d4da"/>
<text x="1626" y="144.5" class="t" textLength="24" lengthAdjust="spacingAndGlyphs" >View</text>
<path d="M1656.5,139.0h7l-3.5,4z" fill="#d0d4da"/>
<path d="M1672,139l3.500,3.500M1676,139.500v3.500h-3.500" stroke="#e3e6ea" stroke-width="1" fill="none"/>
<rect x="0" y="182" width="1920" height="826" fill="#ffffff"/>
<path d="M1806.500,395V784.500" stroke="#b4b4b4" stroke-width="1" fill="none"/>
<g fill="none" stroke="#141414" stroke-width="1.1" stroke-linejoin="miter">
<circle cx="191.8" cy="493.4" r="13.6" fill="none"/>
<circle cx="185.4" cy="496.3" r="3.2" fill="none"/>
<path d="M134.5,441.7H390.2V574.4H134.5zM139.5,450.4H150.6V511H139.5zM139.5,459.1L150.6,459.1M139.5,467.7L150.6,467.7M139.5,476.4L150.6,476.4M139.5,485L150.6,485M139.5,493.7L150.6,493.7M139.5,502.3L150.6,502.3M157.3,450.4H168.4V511H157.3zM157.3,459.1L168.4,459.1M157.3,467.7L168.4,467.7M157.3,476.4L168.4,476.4M157.3,485L168.4,485M157.3,493.7L168.4,493.7M157.3,502.3L168.4,502.3M226.9,450.4L226.9,492.4M226.9,499L226.9,507.6M219,492.4H234.8V499H219zM247.4,450.4L247.4,492.4M247.4,499L247.4,507.6M239.5,492.4H255.3V499H239.5zM267.5,450.4L267.5,492.4M267.5,499L267.5,507.6M259.6,492.4H275.4V499H259.6zM288,450.4L288,492.4M288,499L288,507.6M280.1,492.4H295.9V499H280.1zM308.4,450.4L308.4,492.4M308.4,499L308.4,507.6M300.5,492.4H316.3V499H300.5zM328.6,450.4L328.6,492.4M328.6,499L328.6,507.6M320.7,492.4H336.5V499H320.7zM349,450.4L349,492.4M349,499L349,507.6M341.1,492.4H356.9V499H341.1zM369.4,450.4L369.4,492.4M369.4,499L369.4,507.6M361.5,492.4H377.3V499H361.5zM267.5,516L267.5,555.6M267.5,562L267.5,574.4M259.6,555.6H275.4V562H259.6zM288,516L288,555.6M288,562L288,574.4M280.1,555.6H295.9V562H280.1zM308.4,516L308.4,555.6M308.4,562L308.4,574.4M300.5,555.6H316.3V562H300.5zM328.6,516L328.6,555.6M328.6,562L328.6,574.4M320.7,555.6H336.5V562H320.7zM349,516L349,555.6M349,562L349,574.4M341.1,555.6H356.9V562H341.1zM369.4,516L369.4,555.6M369.4,562L369.4,574.4M361.5,555.6H377.3V562H361.5zM141.4,520.4H199.5V532.3H141.4zM141.4,526.4L199.5,526.4M156,520.4L156,532.3M170.5,520.4L170.5,532.3M184.8,520.4L184.8,532.3M141.6,534.6H199.4V568H141.6zM142.8,535.8H198.2V566.8H142.8zM201.6,520.4H216.6V568H201.6zM201.6,526.4L216.6,526.4M201.6,532.3L216.6,532.3M201.6,538.2L216.6,538.2M201.6,544.2L216.6,544.2M201.6,550.1L216.6,550.1M201.6,556.1L216.6,556.1M201.6,562L216.6,562"/>
<path d="M143.5,596.7H391.6V762.6H143.5zM143.5,757.5L391.6,757.5M150.4,642.3H384.7V749.7H150.4zM150.4,722.4L384.7,722.4M150.4,728.2L384.7,728.2M243.9,604.5H291.6V642.3H243.9zM245.1,605.7H290.4V642.3H245.1zM245.1,612L290.4,612M267.6,605.7L267.6,612"/>
<path d="M156,649.4H378.9V719.6H156zM157.2,650.6H169.8V660.9H157.2zM171.1,650.6H183.7V660.9H171.1zM184.9,650.6H197.5V660.9H184.9zM198.8,650.6H211.4V660.9H198.8zM212.6,650.6H225.3V660.9H212.6zM226.5,650.6H239.1V660.9H226.5zM240.4,650.6H253V660.9H240.4zM323.5,650.6H336.1V660.9H323.5zM337.4,650.6H350V660.9H337.4zM351.2,650.6H363.8V660.9H351.2zM365.1,650.6H377.7V660.9H365.1zM157.2,662.1H169.8V672.4H157.2zM171.1,662.1H183.7V672.4H171.1zM184.9,662.1H197.5V672.4H184.9zM198.8,662.1H211.4V672.4H198.8zM212.6,662.1H225.3V672.4H212.6zM226.5,662.1H239.1V672.4H226.5zM240.4,662.1H253V672.4H240.4zM254.2,662.1H266.8V672.4H254.2zM268.1,662.1H280.7V672.4H268.1zM281.9,662.1H294.5V672.4H281.9zM295.8,662.1H308.4V672.4H295.8zM309.6,662.1H322.3V672.4H309.6zM323.5,662.1H336.1V672.4H323.5zM337.4,662.1H350V672.4H337.4zM351.2,662.1H363.8V672.4H351.2zM365.1,662.1H377.7V672.4H365.1zM157.2,673.6H169.8V683.9H157.2zM184.9,673.6H197.5V683.9H184.9zM198.8,673.6H211.4V683.9H198.8zM212.6,673.6H225.3V683.9H212.6zM226.5,673.6H239.1V683.9H226.5zM240.4,673.6H253V683.9H240.4zM254.2,673.6H266.8V683.9H254.2zM268.1,673.6H280.7V683.9H268.1zM281.9,673.6H294.5V683.9H281.9zM295.8,673.6H308.4V683.9H295.8zM309.6,673.6H322.3V683.9H309.6zM323.5,673.6H336.1V683.9H323.5zM337.4,673.6H350V683.9H337.4zM351.2,673.6H363.8V683.9H351.2zM365.1,673.6H377.7V683.9H365.1zM157.2,685.1H169.8V695.4H157.2zM184.9,685.1H197.5V695.4H184.9zM198.8,685.1H211.4V695.4H198.8zM212.6,685.1H225.3V695.4H212.6zM226.5,685.1H239.1V695.4H226.5zM240.4,685.1H253V695.4H240.4zM254.2,685.1H266.8V695.4H254.2zM268.1,685.1H280.7V695.4H268.1zM281.9,685.1H294.5V695.4H281.9zM295.8,685.1H308.4V695.4H295.8zM309.6,685.1H322.3V695.4H309.6zM323.5,685.1H336.1V695.4H323.5zM337.4,685.1H350V695.4H337.4zM351.2,685.1H363.8V695.4H351.2zM365.1,685.1H377.7V695.4H365.1zM157.2,696.6H169.8V706.9H157.2zM198.8,696.6H211.4V706.9H198.8zM212.6,696.6H225.3V706.9H212.6zM226.5,696.6H239.1V706.9H226.5zM240.4,696.6H253V706.9H240.4zM254.2,696.6H266.8V706.9H254.2zM268.1,696.6H280.7V706.9H268.1zM281.9,696.6H294.5V706.9H281.9zM295.8,696.6H308.4V706.9H295.8zM309.6,696.6H322.3V706.9H309.6zM323.5,696.6H336.1V706.9H323.5zM337.4,696.6H350V706.9H337.4zM351.2,696.6H363.8V706.9H351.2zM365.1,696.6H377.7V706.9H365.1zM157.2,708.1H169.8V718.4H157.2zM171.1,708.1H183.7V718.4H171.1zM184.9,708.1H197.5V718.4H184.9zM198.8,708.1H211.4V718.4H198.8zM212.6,708.1H225.3V718.4H212.6zM226.5,708.1H239.1V718.4H226.5zM240.4,708.1H253V718.4H240.4zM254.2,708.1H266.8V718.4H254.2zM268.1,708.1H280.7V718.4H268.1zM281.9,708.1H294.5V718.4H281.9zM295.8,708.1H308.4V718.4H295.8zM309.6,708.1H322.3V718.4H309.6zM323.5,708.1H336.1V718.4H323.5zM337.4,708.1H350V718.4H337.4zM351.2,708.1H363.8V718.4H351.2zM365.1,708.1H377.7V718.4H365.1zM254.2,650.6H322.3V660.9H254.2zM171.1,673.6H183.7V695.4H171.1zM171.1,696.6H197.5V706.9H171.1z" stroke-width="1.0"/>
<circle cx="658.9" cy="391.9" r="4.8" fill="none"/>
<circle cx="567.6" cy="502" r="101.4" fill="none"/>
<circle cx="567.6" cy="502" r="88.8" fill="none"/>
<circle cx="567.6" cy="502" r="86.2" fill="none"/>
<circle cx="478.1" cy="591.4" r="12.1" fill="none"/>
<circle cx="478.1" cy="591.4" r="9.9" fill="none"/>
<path d="M422.7,374.4H690.4V647.2H422.7zM434.8,382.4H678.1V639.3H434.8zM434.8,622L678.1,622M440.2,388.4H460.6V408.5H440.2zM502,386.2H513.3V397.5H502zM521.4,386.2H532.4V397.5H521.4zM574.3,386.2H585.6V397.5H574.3zM593.4,386.2H604.6V397.5H593.4zM443.5,432.4H454.8V443.5H443.5zM443.5,458.2H454.8V541.8H443.5zM449.2,458.2L449.2,496M449.2,503.4L449.2,541.8M443.5,496L454.8,496M443.5,503.4L454.8,503.4M484.6,585L507.8,560.2M486.2,586.5L509.4,561.7M507.2,559.6L510,562.3"/>
<circle cx="1465.2" cy="391.9" r="4.8" fill="none"/>
<circle cx="1373.9" cy="502" r="101.4" fill="none"/>
<circle cx="1373.9" cy="502" r="88.8" fill="none"/>
<circle cx="1373.9" cy="502" r="86.2" fill="none"/>
<circle cx="1284.4" cy="591.4" r="12.1" fill="none"/>
<circle cx="1284.4" cy="591.4" r="9.9" fill="none"/>
<path d="M1229,374.4H1496.7V647.2H1229zM1241.1,382.4H1484.4V639.3H1241.1zM1241.1,622L1484.4,622M1246.5,388.4H1266.9V408.5H1246.5zM1308.3,386.2H1319.6V397.5H1308.3zM1327.7,386.2H1338.7V397.5H1327.7zM1380.6,386.2H1391.9V397.5H1380.6zM1399.7,386.2H1410.9V397.5H1399.7zM1249.8,432.4H1261.1V443.5H1249.8zM1249.8,458.2H1261.1V541.8H1249.8zM1255.5,458.2L1255.5,496M1255.5,503.4L1255.5,541.8M1249.8,496L1261.1,496M1249.8,503.4L1261.1,503.4M1290.9,585L1314.1,560.2M1292.5,586.5L1315.7,561.7M1313.5,559.6L1316.3,562.3"/>
<circle cx="775.8" cy="459.4" r="56.4" fill="none"/>
<circle cx="775.8" cy="459.4" r="49.6" fill="none"/>
<circle cx="775.8" cy="459.4" r="47.6" fill="none"/>
<path d="M690.4,374.4L861.5,374.4M690.4,374.4L690.4,647.2M731.7,374.4H820.3V382.4H731.7zM698,639.3V382.4H853.8V618.3M719.2,382.4L719.2,608.9M832.2,382.4L832.2,608.9M698,608.9L853.8,608.9M705,392.5H713.2V455.6H705zM709.1,392.5L709.1,436.7M709.1,441.7L709.1,455.6M705,436.7L713.2,436.7M705,441.7L713.2,441.7M701.7,483.9H716.1V495.6H701.7zM708.6,483.9L708.6,495.6M708.6,489.7L716.1,489.7"/>
<circle cx="708.6" cy="511.4" r="4.6" fill="none" stroke-width="2"/>
<circle cx="708.6" cy="530" r="4.6" fill="none" stroke-width="2"/>
<circle cx="728" cy="512.5" r="4.7" fill="none" stroke-width="2.2"/>
<circle cx="728" cy="512.5" r="2.4" fill="none" stroke-width="0.8"/>
<circle cx="708.6" cy="565.3" r="7.5" fill="none"/>
<circle cx="735.8" cy="531.1" r="2.5" fill="none"/>
<circle cx="743.6" cy="531.1" r="2.5" fill="none"/>
<circle cx="751.7" cy="531.1" r="2.5" fill="none"/>
<circle cx="759.4" cy="531.1" r="2.5" fill="none"/>
<circle cx="802.2" cy="531.1" r="2.4" fill="none"/>
<circle cx="813" cy="531.1" r="4.3" fill="none"/>
<circle cx="824.4" cy="531.1" r="4.3" fill="none"/>
<circle cx="823.9" cy="515.8" r="2.6" fill="none"/>
<circle cx="821.1" cy="545.8" r="1.5" fill="none" stroke-width="1.2"/>
<circle cx="730.3" cy="568" r="4.3" fill="none" stroke-width="1.6"/>
<circle cx="730.3" cy="566.6" r="2.4" fill="none" stroke-width="0.8"/>
<path d="M703.6,543.6H713.6V548.9H703.6zM708.6,543.6L708.6,548.9M724.2,542.8H828V604.7H724.2zM736.4,553.6H814.4V592.8H736.4zM816.7,550.6H826.7V555.6H816.7zM816.7,560.6H826.7V565.6H816.7zM816.7,571.1H826.7V576.1H816.7zM816.7,581.1H826.7V586.1H816.7zM816.7,591.7H826.7V596.7H816.7zM738.3,595.3H755.3V601.4H738.3zM757.8,595.3H774.7V601.4H757.8zM777.2,595.3H794.2V601.4H777.2zM796.7,595.3H813.6V601.4H796.7z"/>
<path d="M729.6,599H734.2V601.2H729.6z" stroke-width="1.2"/>
<path d="M726,600l2.4,-1.500v3z" fill="#111" stroke="none"/>
<circle cx="843.2" cy="393.3" r="8" fill="none"/>
<circle cx="843.2" cy="414.2" r="8" fill="none"/>
<circle cx="838.1" cy="441.9" r="2.5" fill="none"/>
<circle cx="848.6" cy="441.9" r="2.5" fill="none"/>
<circle cx="838.1" cy="451.1" r="2.5" fill="none"/>
<circle cx="848.6" cy="451.1" r="2.5" fill="none"/>
<path d="M838.1,439.4H848.6a2.5,2.5 0 0 1 0,5.0H838.1a2.5,2.5 0 0 1 0,-5.0zM838.1,448.6H848.6a2.5,2.5 0 0 1 0,5.0H838.1a2.5,2.5 0 0 1 0,-5.0z" stroke-width="1.2"/>
<rect x="837.2" y="471.400" width="11.700" height="5.600" fill="#555" stroke="#111"/>
<path d="M837.5,493.9H848.6V499.4H837.5zM837.5,503.3H848.6V508.9H837.5zM837.5,513H848.6V518.6H837.5zM837.5,550.6H848.6V556.1H837.5zM837.5,562.5H848.6V570.3H837.5zM698,639.3L719.5,639.3M690.4,647.2L721,647.2M698,608.9L698,639.3M861.5,374.4L861.5,622M835.5,618.3L861.5,618.3"/>
<circle cx="1143.2" cy="459.4" r="56.4" fill="none"/>
<circle cx="1143.2" cy="459.4" r="49.6" fill="none"/>
<circle cx="1143.2" cy="459.4" r="47.6" fill="none"/>
<path d="M1057.8,374.4L1228.9,374.4M1057.8,374.4L1057.8,647.2M1099.1,374.4H1187.7V382.4H1099.1zM1065.4,639.3V382.4H1221.2V639.3M1086.6,382.4L1086.6,608.9M1199.6,382.4L1199.6,608.9M1065.4,608.9L1221.2,608.9M1072.4,392.5H1080.6V455.6H1072.4zM1076.5,392.5L1076.5,436.7M1076.5,441.7L1076.5,455.6M1072.4,436.7L1080.6,436.7M1072.4,441.7L1080.6,441.7M1069.1,483.9H1083.5V495.6H1069.1zM1076,483.9L1076,495.6M1076,489.7L1083.5,489.7"/>
<circle cx="1076" cy="511.4" r="4.6" fill="none" stroke-width="2"/>
<circle cx="1076" cy="530" r="4.6" fill="none" stroke-width="2"/>
<circle cx="1095.4" cy="512.5" r="4.7" fill="none" stroke-width="2.2"/>
<circle cx="1095.4" cy="512.5" r="2.4" fill="none" stroke-width="0.8"/>
<circle cx="1076" cy="565.3" r="7.5" fill="none"/>
<circle cx="1103.2" cy="531.1" r="2.5" fill="none"/>
<circle cx="1111" cy="531.1" r="2.5" fill="none"/>
<circle cx="1119.1" cy="531.1" r="2.5" fill="none"/>
<circle cx="1126.8" cy="531.1" r="2.5" fill="none"/>
<circle cx="1169.6" cy="531.1" r="2.4" fill="none"/>
<circle cx="1180.4" cy="531.1" r="4.3" fill="none"/>
<circle cx="1191.8" cy="531.1" r="4.3" fill="none"/>
<circle cx="1191.3" cy="515.8" r="2.6" fill="none"/>
<circle cx="1188.5" cy="545.8" r="1.5" fill="none" stroke-width="1.2"/>
<circle cx="1097.7" cy="568" r="4.3" fill="none" stroke-width="1.6"/>
<circle cx="1097.7" cy="566.6" r="2.4" fill="none" stroke-width="0.8"/>
<path d="M1071,543.6H1081V548.9H1071zM1076,543.6L1076,548.9M1091.6,542.8H1195.4V604.7H1091.6zM1103.8,553.6H1181.8V592.8H1103.8zM1184.1,550.6H1194.1V555.6H1184.1zM1184.1,560.6H1194.1V565.6H1184.1zM1184.1,571.1H1194.1V576.1H1184.1zM1184.1,581.1H1194.1V586.1H1184.1zM1184.1,591.7H1194.1V596.7H1184.1zM1105.7,595.3H1122.7V601.4H1105.7zM1125.2,595.3H1142.1V601.4H1125.2zM1144.6,595.3H1161.6V601.4H1144.6zM1164.1,595.3H1181V601.4H1164.1z"/>
<path d="M1097,599H1101.6V601.2H1097z" stroke-width="1.2"/>
<path d="M1093.4,600l2.4,-1.500v3z" fill="#111" stroke="none"/>
<circle cx="1210.6" cy="393.3" r="8" fill="none"/>
<circle cx="1210.6" cy="414.2" r="8" fill="none"/>
<circle cx="1205.5" cy="441.9" r="2.5" fill="none"/>
<circle cx="1216" cy="441.9" r="2.5" fill="none"/>
<circle cx="1205.5" cy="451.1" r="2.5" fill="none"/>
<circle cx="1216" cy="451.1" r="2.5" fill="none"/>
<path d="M1205.5,439.4H1216a2.5,2.5 0 0 1 0,5.0H1205.5a2.5,2.5 0 0 1 0,-5.0zM1205.5,448.6H1216a2.5,2.5 0 0 1 0,5.0H1205.5a2.5,2.5 0 0 1 0,-5.0z" stroke-width="1.2"/>
<rect x="1204.6" y="471.400" width="11.700" height="5.600" fill="#555" stroke="#111"/>
<path d="M1204.9,493.9H1216V499.4H1204.9zM1204.9,503.3H1216V508.9H1204.9zM1204.9,513H1216V518.6H1204.9zM1204.9,550.6H1216V556.1H1204.9zM1204.9,562.5H1216V570.3H1204.9zM1065.4,639.3L1221.2,639.3M1057.8,647.2L1228.9,647.2"/>
<circle cx="884.6" cy="393.3" r="7.2" fill="none"/>
<circle cx="875" cy="498.8" r="1.4" fill="none"/>
<circle cx="893.8" cy="498.8" r="1.4" fill="none"/>
<circle cx="884.4" cy="506.5" r="7" fill="none" stroke-width="1.3"/>
<rect x="876.200" y="589.600" width="4.300" height="4.800" fill="#666"/>
<rect x="873.500" y="519.300" width="4.400" height="3.300" fill="#888"/><rect x="891.400" y="519.300" width="4.400" height="3.300" fill="#888"/>
<path d="M861.5,374.4L1057.6,374.4M1057.6,374.4L1057.6,622M869.600,622V382.400H1050V622M869.6,605.4L1050,605.4M869.6,609.4L1050,609.4M876.2,467.5H892.8V475.2H876.2zM874.900,527h19.200a1.900,1.900 0 0 1 0,3.800h-19.200a1.900,1.900 0 0 1 0,-3.800zM872.3,535.4H896.4V581.6H872.3zM882,589.6H886.3V594.4H882zM888,589.6H892.8V594.4H888zM906,400.8H916.7V405H906zM908.8,400.8H913.9V405H908.8zM906,409H916.7V413.3H906zM908.8,409H913.9V413.3H908.8zM906,416.9H916.7V421.2H906zM908.8,416.9H913.9V421.2H908.8zM905.6,447.5H916.9V451.8H905.6zM911.3,447.5L911.3,451.8M903.2,456.6H919.5V464.3H903.2zM962.2,397.6L986.3,397.6M970.1,392.6H974.7V402.2H970.1zM930.9,409H941.5V413.3H930.9zM933.7,409H938.7V413.3H933.7zM936.2,420.5L936.2,436.2M936.2,440.7L936.2,452.8M930.9,436.2H941.5V440.7H930.9zM928,456.6H944.4V464.3H928zM955.9,409H966.5V413.3H955.9zM958.7,409H963.7V413.3H958.7zM961.2,420.5L961.2,436.2M961.2,440.7L961.2,452.8M955.9,436.2H966.5V440.7H955.9zM953,456.6H969.4V464.3H953zM981.4,409H992V413.3H981.4zM984.2,409H989.2V413.3H984.2zM986.7,420.5L986.7,436.2M986.7,440.7L986.7,452.8M981.4,436.2H992V440.7H981.4zM978.5,456.6H994.9V464.3H978.5zM1006.5,409H1017.1V413.3H1006.5zM1009.3,409H1014.3V413.3H1009.3zM1011.8,420.5L1011.8,436.2M1011.8,440.7L1011.8,452.8M1006.5,436.2H1017.1V440.7H1006.5zM1003.6,456.6H1020V464.3H1003.6z"/>
<path d="M936.2,420.500V436.200M936.2,440.700V452.800M961.2,420.500V436.200M961.2,440.700V452.800M986.7,420.500V436.200M986.7,440.700V452.800M1011.8,420.500V436.200M1011.8,440.700V452.800" stroke-width="1.6"/>
<circle cx="884.6" cy="414.5" r="6.7" fill="none" stroke-width="1.9"/>
<circle cx="884.6" cy="413.5" r="4.5" fill="none" stroke-width="1.2"/>
<circle cx="884.6" cy="433" r="6.7" fill="none" stroke-width="1.9"/>
<circle cx="884.6" cy="432" r="4.5" fill="none" stroke-width="1.2"/>
<circle cx="884.6" cy="451.6" r="6.7" fill="none" stroke-width="1.9"/>
<circle cx="884.6" cy="450.6" r="4.5" fill="none" stroke-width="1.2"/>
<circle cx="911.4" cy="435.4" r="6.7" fill="none" stroke-width="1.9"/>
<circle cx="911.4" cy="434.4" r="4.5" fill="none" stroke-width="1.2"/>
<circle cx="911.4" cy="471.6" r="6.7" fill="none" stroke-width="1.9"/>
<circle cx="911.4" cy="470.6" r="4.5" fill="none" stroke-width="1.2"/>
<circle cx="911.4" cy="589.1" r="6.7" fill="none" stroke-width="1.9"/>
<circle cx="911.4" cy="588.1" r="4.5" fill="none" stroke-width="1.2"/>
<circle cx="933.3" cy="471.6" r="6.7" fill="none" stroke-width="1.9"/>
<circle cx="933.3" cy="470.6" r="4.5" fill="none" stroke-width="1.2"/>
<circle cx="933.3" cy="492" r="6.7" fill="none" stroke-width="1.9"/>
<circle cx="933.3" cy="491" r="4.5" fill="none" stroke-width="1.2"/>
<circle cx="933.3" cy="516.1" r="6.7" fill="none" stroke-width="1.9"/>
<circle cx="933.3" cy="515.1" r="4.5" fill="none" stroke-width="1.2"/>
<circle cx="933.3" cy="540.2" r="6.7" fill="none" stroke-width="1.9"/>
<circle cx="933.3" cy="539.2" r="4.5" fill="none" stroke-width="1.2"/>
<circle cx="933.3" cy="565" r="6.7" fill="none" stroke-width="1.9"/>
<circle cx="933.3" cy="564" r="4.5" fill="none" stroke-width="1.2"/>
<circle cx="933.3" cy="589.1" r="6.7" fill="none" stroke-width="1.9"/>
<circle cx="933.3" cy="588.1" r="4.5" fill="none" stroke-width="1.2"/>
<circle cx="958.6" cy="471.6" r="6.7" fill="none" stroke-width="1.9"/>
<circle cx="958.6" cy="470.6" r="4.5" fill="none" stroke-width="1.2"/>
<circle cx="958.6" cy="492" r="6.7" fill="none" stroke-width="1.9"/>
<circle cx="958.6" cy="491" r="4.5" fill="none" stroke-width="1.2"/>
<circle cx="958.6" cy="516.1" r="6.7" fill="none" stroke-width="1.9"/>
<circle cx="958.6" cy="515.1" r="4.5" fill="none" stroke-width="1.2"/>
<circle cx="958.6" cy="540.2" r="6.7" fill="none" stroke-width="1.9"/>
<circle cx="958.6" cy="539.2" r="4.5" fill="none" stroke-width="1.2"/>
<circle cx="958.6" cy="565" r="6.7" fill="none" stroke-width="1.9"/>
<circle cx="958.6" cy="564" r="4.5" fill="none" stroke-width="1.2"/>
<circle cx="958.6" cy="589.1" r="6.7" fill="none" stroke-width="1.9"/>
<circle cx="958.6" cy="588.1" r="4.5" fill="none" stroke-width="1.2"/>
<circle cx="983.4" cy="471.6" r="6.7" fill="none" stroke-width="1.9"/>
<circle cx="983.4" cy="470.6" r="4.5" fill="none" stroke-width="1.2"/>
<circle cx="983.4" cy="492" r="6.7" fill="none" stroke-width="1.9"/>
<circle cx="983.4" cy="491" r="4.5" fill="none" stroke-width="1.2"/>
<circle cx="983.4" cy="516.1" r="6.7" fill="none" stroke-width="1.9"/>
<circle cx="983.4" cy="515.1" r="4.5" fill="none" stroke-width="1.2"/>
<circle cx="983.4" cy="540.2" r="6.7" fill="none" stroke-width="1.9"/>
<circle cx="983.4" cy="539.2" r="4.5" fill="none" stroke-width="1.2"/>
<circle cx="983.4" cy="565" r="6.7" fill="none" stroke-width="1.9"/>
<circle cx="983.4" cy="564" r="4.5" fill="none" stroke-width="1.2"/>
<circle cx="983.4" cy="589.1" r="6.7" fill="none" stroke-width="1.9"/>
<circle cx="983.4" cy="588.1" r="4.5" fill="none" stroke-width="1.2"/>
<circle cx="1008.7" cy="471.6" r="6.7" fill="none" stroke-width="1.9"/>
<circle cx="1008.7" cy="470.6" r="4.5" fill="none" stroke-width="1.2"/>
<circle cx="1008.7" cy="492" r="6.7" fill="none" stroke-width="1.9"/>
<circle cx="1008.7" cy="491" r="4.5" fill="none" stroke-width="1.2"/>
<circle cx="1008.7" cy="516.1" r="6.7" fill="none" stroke-width="1.9"/>
<circle cx="1008.7" cy="515.1" r="4.5" fill="none" stroke-width="1.2"/>
<circle cx="1008.7" cy="540.2" r="6.7" fill="none" stroke-width="1.9"/>
<circle cx="1008.7" cy="539.2" r="4.5" fill="none" stroke-width="1.2"/>
<circle cx="1008.7" cy="565" r="6.7" fill="none" stroke-width="1.9"/>
<circle cx="1008.7" cy="564" r="4.5" fill="none" stroke-width="1.2"/>
<circle cx="1008.7" cy="589.1" r="6.7" fill="none" stroke-width="1.9"/>
<circle cx="1008.7" cy="588.1" r="4.5" fill="none" stroke-width="1.2"/>
<circle cx="906.8" cy="491.4" r="1.5" fill="none" stroke-width="1.1"/>
<circle cx="906.8" cy="497.5" r="1.5" fill="none" stroke-width="1.1"/>
<circle cx="906.8" cy="509.7" r="1.5" fill="none" stroke-width="1.1"/>
<circle cx="906.8" cy="515.8" r="1.5" fill="none" stroke-width="1.1"/>
<circle cx="906.8" cy="527.9" r="1.5" fill="none" stroke-width="1.1"/>
<circle cx="906.8" cy="534" r="1.5" fill="none" stroke-width="1.1"/>
<circle cx="906.8" cy="546.2" r="1.5" fill="none" stroke-width="1.1"/>
<circle cx="906.8" cy="552.3" r="1.5" fill="none" stroke-width="1.1"/>
<circle cx="906.8" cy="564.5" r="1.5" fill="none" stroke-width="1.1"/>
<circle cx="906.8" cy="570.6" r="1.5" fill="none" stroke-width="1.1"/>
<circle cx="915.9" cy="491.4" r="1.5" fill="none" stroke-width="1.1"/>
<circle cx="915.9" cy="497.5" r="1.5" fill="none" stroke-width="1.1"/>
<circle cx="915.9" cy="509.7" r="1.5" fill="none" stroke-width="1.1"/>
<circle cx="915.9" cy="515.8" r="1.5" fill="none" stroke-width="1.1"/>
<circle cx="915.9" cy="527.9" r="1.5" fill="none" stroke-width="1.1"/>
<circle cx="915.9" cy="534" r="1.5" fill="none" stroke-width="1.1"/>
<circle cx="915.9" cy="546.2" r="1.5" fill="none" stroke-width="1.1"/>
<circle cx="915.9" cy="552.3" r="1.5" fill="none" stroke-width="1.1"/>
<circle cx="915.9" cy="564.5" r="1.5" fill="none" stroke-width="1.1"/>
<circle cx="915.9" cy="570.6" r="1.5" fill="none" stroke-width="1.1"/>
<circle cx="945.8" cy="491.4" r="1.5" fill="none" stroke-width="1.1"/>
<circle cx="945.8" cy="497.5" r="1.5" fill="none" stroke-width="1.1"/>
<circle cx="945.8" cy="509.7" r="1.5" fill="none" stroke-width="1.1"/>
<circle cx="945.8" cy="515.8" r="1.5" fill="none" stroke-width="1.1"/>
<circle cx="945.8" cy="527.9" r="1.5" fill="none" stroke-width="1.1"/>
<circle cx="945.8" cy="534" r="1.5" fill="none" stroke-width="1.1"/>
<circle cx="945.8" cy="546.2" r="1.5" fill="none" stroke-width="1.1"/>
<circle cx="945.8" cy="552.3" r="1.5" fill="none" stroke-width="1.1"/>
<circle cx="945.8" cy="564.5" r="1.5" fill="none" stroke-width="1.1"/>
<circle cx="945.8" cy="570.6" r="1.5" fill="none" stroke-width="1.1"/>
<circle cx="970.8" cy="485.3" r="1.5" fill="none" stroke-width="1.1"/>
<circle cx="970.8" cy="491.4" r="1.5" fill="none" stroke-width="1.1"/>
<circle cx="970.8" cy="503.6" r="1.5" fill="none" stroke-width="1.1"/>
<circle cx="970.8" cy="509.7" r="1.5" fill="none" stroke-width="1.1"/>
<circle cx="970.8" cy="521.8" r="1.5" fill="none" stroke-width="1.1"/>
<circle cx="970.8" cy="527.9" r="1.5" fill="none" stroke-width="1.1"/>
<circle cx="970.8" cy="540.1" r="1.5" fill="none" stroke-width="1.1"/>
<circle cx="970.8" cy="546.2" r="1.5" fill="none" stroke-width="1.1"/>
<circle cx="970.8" cy="558.4" r="1.5" fill="none" stroke-width="1.1"/>
<circle cx="970.8" cy="564.5" r="1.5" fill="none" stroke-width="1.1"/>
<circle cx="970.8" cy="576.6" r="1.5" fill="none" stroke-width="1.1"/>
<circle cx="995.9" cy="485.3" r="1.5" fill="none" stroke-width="1.1"/>
<circle cx="995.9" cy="497.5" r="1.5" fill="none" stroke-width="1.1"/>
<circle cx="995.9" cy="503.6" r="1.5" fill="none" stroke-width="1.1"/>
<circle cx="995.9" cy="515.8" r="1.5" fill="none" stroke-width="1.1"/>
<circle cx="995.9" cy="521.8" r="1.5" fill="none" stroke-width="1.1"/>
<circle cx="995.9" cy="534" r="1.5" fill="none" stroke-width="1.1"/>
<circle cx="995.9" cy="540.1" r="1.5" fill="none" stroke-width="1.1"/>
<circle cx="995.9" cy="552.3" r="1.5" fill="none" stroke-width="1.1"/>
<circle cx="995.9" cy="558.4" r="1.5" fill="none" stroke-width="1.1"/>
<circle cx="995.9" cy="570.6" r="1.5" fill="none" stroke-width="1.1"/>
<circle cx="995.9" cy="576.6" r="1.5" fill="none" stroke-width="1.1"/>
<circle cx="1021.2" cy="485.3" r="1.5" fill="none" stroke-width="1.1"/>
<circle cx="1021.2" cy="491.4" r="1.5" fill="none" stroke-width="1.1"/>
<circle cx="1021.2" cy="503.6" r="1.5" fill="none" stroke-width="1.1"/>
<circle cx="1021.2" cy="509.7" r="1.5" fill="none" stroke-width="1.1"/>
<circle cx="1021.2" cy="521.8" r="1.5" fill="none" stroke-width="1.1"/>
<circle cx="1021.2" cy="527.9" r="1.5" fill="none" stroke-width="1.1"/>
<circle cx="1021.2" cy="540.1" r="1.5" fill="none" stroke-width="1.1"/>
<circle cx="1021.2" cy="546.2" r="1.5" fill="none" stroke-width="1.1"/>
<circle cx="1021.2" cy="558.4" r="1.5" fill="none" stroke-width="1.1"/>
<circle cx="1021.2" cy="564.5" r="1.5" fill="none" stroke-width="1.1"/>
<circle cx="1021.2" cy="576.6" r="1.5" fill="none" stroke-width="1.1"/>
<path d="M905.3,483.9H908.3V486.7H905.3zM905.3,502.2H908.3V505H905.3zM905.3,520.4H908.3V523.2H905.3zM905.3,538.7H908.3V541.5H905.3zM905.3,557H908.3V559.8H905.3zM905.3,575.2H908.3V578H905.3zM914.4,483.9H917.4V486.7H914.4zM914.4,502.2H917.4V505H914.4zM914.4,520.4H917.4V523.2H914.4zM914.4,538.7H917.4V541.5H914.4zM914.4,557H917.4V559.8H914.4zM914.4,575.2H917.4V578H914.4zM944.3,483.9H947.3V486.7H944.3zM944.3,502.2H947.3V505H944.3zM944.3,520.4H947.3V523.2H944.3zM944.3,538.7H947.3V541.5H944.3zM944.3,557H947.3V559.8H944.3zM944.3,575.2H947.3V578H944.3zM969.3,496.1H972.3V498.9H969.3zM969.3,514.4H972.3V517.1H969.3zM969.3,532.6H972.3V535.4H969.3zM969.3,550.9H972.3V553.7H969.3zM969.3,569.2H972.3V572H969.3zM994.4,490H997.4V492.8H994.4zM994.4,508.3H997.4V511.1H994.4zM994.4,526.5H997.4V529.3H994.4zM994.4,544.8H997.4V547.6H994.4zM994.4,563.1H997.4V565.9H994.4zM1019.7,496.1H1022.7V498.9H1019.7zM1019.7,514.4H1022.7V517.1H1019.7zM1019.7,532.6H1022.7V535.4H1019.7zM1019.7,550.9H1022.7V553.7H1019.7zM1019.7,569.2H1022.7V572H1019.7z" stroke-width="1.1"/>
<circle cx="1039.2" cy="392.6" r="4.6" fill="none" stroke-width="1.8"/>
<circle cx="1037.3" cy="414.5" r="6.7" fill="none" stroke-width="1.9"/>
<circle cx="1037.3" cy="413.5" r="4.5" fill="none" stroke-width="1.2"/>
<circle cx="1037.3" cy="433" r="6.7" fill="none" stroke-width="1.9"/>
<circle cx="1037.3" cy="432" r="4.5" fill="none" stroke-width="1.2"/>
<circle cx="1038" cy="493.5" r="2.2" fill="none"/>
<path d="M1030,443.8H1031.6V445.4H1030zM1036.5,443.8H1038.1V445.4H1036.5zM1042.8,443.8H1044.4V445.4H1042.8zM1028.9,448.7H1045.7V455.7H1028.9zM1025.5,467.5H1030.1V472.5H1025.5zM1031.6,467.5H1036.2V472.5H1031.6zM1037.7,467.5H1042.3V472.5H1037.7zM1043.8,467.5H1048.4V472.5H1043.8zM1025.5,474.1H1030.1V479.1H1025.5zM1031.6,474.1H1036.2V479.1H1031.6zM1037.7,474.1H1042.3V479.1H1037.7zM1043.8,474.1H1048.4V479.1H1043.8zM1034,496.400h8a2.200,2.200 0 0 0 0,-4.400h-8a2.200,2.200 0 0 0 0,4.400z" stroke-width="1.1"/>
<circle cx="1037.3" cy="511.8" r="5.4" fill="none" stroke-width="1.6"/>
<circle cx="1037.3" cy="510.6" r="3" fill="none" stroke-width="1"/>
<circle cx="1037.3" cy="525.8" r="5.4" fill="none" stroke-width="1.6"/>
<circle cx="1037.3" cy="524.6" r="3" fill="none" stroke-width="1"/>
<circle cx="1037.3" cy="539.2" r="5.4" fill="none" stroke-width="1.6"/>
<circle cx="1037.3" cy="538" r="3" fill="none" stroke-width="1"/>
<circle cx="1037.3" cy="553" r="5.4" fill="none" stroke-width="1.6"/>
<circle cx="1037.3" cy="551.8" r="3" fill="none" stroke-width="1"/>
<circle cx="1041.2" cy="588.6" r="4" fill="none"/>
<path d="M1028.4,584.8H1036.1V592.5H1028.4z"/>
<circle cx="748.3" cy="628.1" r="4.6" fill="none"/>
<path d="M720.8,611.5H830.8Q836.5,620 835.4,627Q835.5,634 834.4,639.6L830.8,644.8H720.8L717.300,639.6Q716.200,634 716.250,627Q716,620 720.8,611.500zM717.300,639.600L721.800,648.300H829.800L834.400,639.600M764.6,648.3H787.5V656.2H764.6zM742.5,626L736.6,623.8M744.7,623L741.1,617.9M747.2,622L746.1,615.8M749.9,622.1L751.5,616M752.3,623.4L756.3,618.5M754.1,626L760,623.8M754.1,630.2L760,632.4M751.9,633.2L755.5,638.3M749.4,634.2L750.5,640.4M747.2,634.2L746.1,640.4M744.7,633.2L741.1,638.3M742.5,630.2L736.6,632.4"/>
<circle cx="780.2" cy="615.6" r="2.3" fill="none"/>
<path d="M727.2,614.5v1.5a2,2 0 0 0 4,0v-1.500M770.5,614.5v1.5a2,2 0 0 0 4,0v-1.500M810.5,614.5v1.5a2,2 0 0 0 4,0v-1.500" stroke-width="1.3"/>
<g fill="#111" stroke="none"><rect x="727.6" y="625" width="2.8" height="3"/><rect x="727.6" y="629" width="2.8" height="3"/><rect x="728.5" y="638.4" width="3.5" height="1.6"/><rect x="771" y="620.7" width="2" height="1.6"/><rect x="782.3" y="620.4" width="3.2" height="2.2"/><rect x="786.5" y="620.4" width="3.1" height="2.2"/><rect x="792.7" y="620.4" width="4.2" height="2.2"/><rect x="800" y="620.4" width="3.5" height="2.2"/><rect x="804.5" y="620.4" width="3.8" height="2.2"/><rect x="812.8" y="620.4" width="1.4" height="2.2"/><rect x="775.5" y="629.5" width="1" height="1"/><rect x="794.3" y="629.5" width="1" height="1"/><rect x="781.2" y="628.5" width="3.8" height="2.2"/><rect x="786" y="628.5" width="3.6" height="2.2"/><rect x="799.6" y="628.5" width="4" height="2.2"/><rect x="804.6" y="628.5" width="4.2" height="2.2"/><rect x="796.2" y="635.2" width="23.6" height="3.6"/><rect x="821.5" y="622" width="3" height="1.8"/><rect x="821.5" y="629.9" width="3" height="1.8"/></g>
<path d="M770.9,635.2H774.1V638.8H770.9zM778.6,635.2H781.8V638.8H778.6zM785.9,635.2H789.1V638.8H785.9zM771.300,635.200a1.200,1.500 0 0 1 2.400,0M778.8,636.2L781.6,636.2M787.5,635.2L787.5,638.8" stroke-width="0.9"/>
<rect x="835.600" y="621.500" width="248.100" height="161.100" fill="#fff" stroke="none"/>
<path d="M835.6,784.9V622H1083.7V784.9M835.6,782.8L1083.7,782.8M836.8,622L836.8,784.9M1082.6,622L1082.6,784.9M842.5,667.6H1076.8V775H842.5zM842.5,747.7L1076.8,747.7M842.5,753.5L1076.8,753.5M936,629.8H983.7V667.6H936zM937.2,631H982.5V667.6H937.2zM937.2,637.3L982.5,637.3M959.7,631L959.7,637.3"/>
<path d="M848.1,674.7H1071V744.9H848.1zM849.3,675.9H861.9V686.2H849.3zM863.2,675.9H875.8V686.2H863.2zM877,675.9H889.6V686.2H877zM890.9,675.9H903.5V686.2H890.9zM904.7,675.9H917.4V686.2H904.7zM918.6,675.9H931.2V686.2H918.6zM932.5,675.9H945.1V686.2H932.5zM1015.6,675.9H1028.2V686.2H1015.6zM1029.5,675.9H1042.1V686.2H1029.5zM1043.3,675.9H1055.9V686.2H1043.3zM1057.2,675.9H1069.8V686.2H1057.2zM849.3,687.4H861.9V697.7H849.3zM863.2,687.4H875.8V697.7H863.2zM877,687.4H889.6V697.7H877zM890.9,687.4H903.5V697.7H890.9zM904.7,687.4H917.4V697.7H904.7zM918.6,687.4H931.2V697.7H918.6zM932.5,687.4H945.1V697.7H932.5zM946.3,687.4H958.9V697.7H946.3zM960.2,687.4H972.8V697.7H960.2zM974,687.4H986.6V697.7H974zM987.9,687.4H1000.5V697.7H987.9zM1001.7,687.4H1014.4V697.7H1001.7zM1015.6,687.4H1028.2V697.7H1015.6zM1029.5,687.4H1042.1V697.7H1029.5zM1043.3,687.4H1055.9V697.7H1043.3zM1057.2,687.4H1069.8V697.7H1057.2zM849.3,698.9H861.9V709.2H849.3zM877,698.9H889.6V709.2H877zM890.9,698.9H903.5V709.2H890.9zM904.7,698.9H917.4V709.2H904.7zM918.6,698.9H931.2V709.2H918.6zM932.5,698.9H945.1V709.2H932.5zM946.3,698.9H958.9V709.2H946.3zM960.2,698.9H972.8V709.2H960.2zM974,698.9H986.6V709.2H974zM987.9,698.9H1000.5V709.2H987.9zM1001.7,698.9H1014.4V709.2H1001.7zM1015.6,698.9H1028.2V709.2H1015.6zM1029.5,698.9H1042.1V709.2H1029.5zM1043.3,698.9H1055.9V709.2H1043.3zM1057.2,698.9H1069.8V709.2H1057.2zM849.3,710.4H861.9V720.7H849.3zM877,710.4H889.6V720.7H877zM890.9,710.4H903.5V720.7H890.9zM904.7,710.4H917.4V720.7H904.7zM918.6,710.4H931.2V720.7H918.6zM932.5,710.4H945.1V720.7H932.5zM946.3,710.4H958.9V720.7H946.3zM960.2,710.4H972.8V720.7H960.2zM974,710.4H986.6V720.7H974zM987.9,710.4H1000.5V720.7H987.9zM1001.7,710.4H1014.4V720.7H1001.7zM1015.6,710.4H1028.2V720.7H1015.6zM1029.5,710.4H1042.1V720.7H1029.5zM1043.3,710.4H1055.9V720.7H1043.3zM1057.2,710.4H1069.8V720.7H1057.2zM849.3,721.9H861.9V732.2H849.3zM890.9,721.9H903.5V732.2H890.9zM904.7,721.9H917.4V732.2H904.7zM918.6,721.9H931.2V732.2H918.6zM932.5,721.9H945.1V732.2H932.5zM946.3,721.9H958.9V732.2H946.3zM960.2,721.9H972.8V732.2H960.2zM974,721.9H986.6V732.2H974zM987.9,721.9H1000.5V732.2H987.9zM1001.7,721.9H1014.4V732.2H1001.7zM1015.6,721.9H1028.2V732.2H1015.6zM1029.5,721.9H1042.1V732.2H1029.5zM1043.3,721.9H1055.9V732.2H1043.3zM1057.2,721.9H1069.8V732.2H1057.2zM849.3,733.4H861.9V743.7H849.3zM863.2,733.4H875.8V743.7H863.2zM877,733.4H889.6V743.7H877zM890.9,733.4H903.5V743.7H890.9zM904.7,733.4H917.4V743.7H904.7zM918.6,733.4H931.2V743.7H918.6zM932.5,733.4H945.1V743.7H932.5zM946.3,733.4H958.9V743.7H946.3zM960.2,733.4H972.8V743.7H960.2zM974,733.4H986.6V743.7H974zM987.9,733.4H1000.5V743.7H987.9zM1001.7,733.4H1014.4V743.7H1001.7zM1015.6,733.4H1028.2V743.7H1015.6zM1029.5,733.4H1042.1V743.7H1029.5zM1043.3,733.4H1055.9V743.7H1043.3zM1057.2,733.4H1069.8V743.7H1057.2zM946.3,675.9H1014.4V686.2H946.3zM863.2,698.9H875.8V720.7H863.2zM863.2,721.9H889.6V732.2H863.2z" stroke-width="1.0"/>
<path d="M1057.600,618.300H1083.700"/>
<circle cx="1551.3" cy="408.9" r="4.1" fill="none"/>
<circle cx="1551.3" cy="456.8" r="4.1" fill="none"/>
<circle cx="1551.3" cy="467.9" r="4.1" fill="none"/>
<circle cx="1567.6" cy="497.7" r="4.1" fill="none"/>
<circle cx="1584.1" cy="497.7" r="4.1" fill="none"/>
<circle cx="1584.1" cy="396.8" r="4.1" fill="none"/>
<circle cx="1584.1" cy="419.4" r="4.1" fill="none"/>
<path d="M1514.4,384.8H1801.3V591.4H1514.4zM1526.500,384.800V591.400M1789.400,384.800V591.400M1526.500,586.500H1789.400M1526.5,508.2L1789.4,508.2M1526.5,567.3L1789.4,567.3M1559.9,384.8L1559.9,508.2M1575.7,384.8L1575.7,508.2M1592.7,384.8L1592.7,508.2M1723.4,384.8L1723.4,508.2M1740.4,384.8L1740.4,508.2M1756.9,384.8L1756.9,508.2M1642.4,508.2L1642.4,586.5M1673.4,508.2L1673.4,586.5M1559.9,494.5L1592.7,494.5M1624.8,384.8H1690.7V399.5H1624.8zM1641.4,392L1674.5,392M1648.7,389.5H1652.2V394.7H1648.7zM1548.3,390.7H1554.7V393.2H1548.3zM1564.4,390.7H1570.8V393.2H1564.4zM1545.5,411.9a5.800,5.800 0 0 0 11.600,0M1548.3,440.4H1554.7V443.1H1548.3zM1565.8,440.4H1569.4V443.6H1565.8zM1582.3,440.4H1585.9V443.6H1582.3zM1545.5,459.8a5.800,5.800 0 0 0 11.600,0M1545.5,470.9a5.800,5.800 0 0 0 11.600,0M1547.3,489.6H1555.9V499.6H1547.3zM1561.8,500.7a5.800,5.800 0 0 0 11.600,0M1578.3,500.7a5.800,5.800 0 0 0 11.600,0M1578.3,399.8a5.800,5.800 0 0 0 11.600,0M1578.3,422.4a5.800,5.800 0 0 0 11.600,0"/>
<circle cx="1551.3" cy="422.1" r="4.6" fill="none" stroke-width="2.2"/>
<rect x="1550.1" y="417.500" width="2.400" height="8" fill="#222" stroke="none"/>
<circle cx="1567.6" cy="422.1" r="4.6" fill="none" stroke-width="2.2"/>
<rect x="1566.3999999999999" y="417.500" width="2.400" height="8" fill="#222" stroke="none"/>
<path d="M1602.2,392.4H1615.4V396H1602.2zM1605.8,391.6H1611.8V396.8H1605.8zM1602.2,401.3H1615.4V405.2H1602.2zM1605.8,400.5H1611.8V406H1605.8zM1607.6,408.4H1610V448.5H1607.6z"/>
<rect x="1603" y="437.200" width="11.600" height="6.400" fill="#fff"/>
<circle cx="1600.3" cy="456.8" r="4.1" fill="none"/>
<circle cx="1600.3" cy="467.9" r="4.1" fill="none"/>
<circle cx="1600.3" cy="478.9" r="4.1" fill="none"/>
<circle cx="1616.8" cy="478.9" r="4.1" fill="none"/>
<path d="M1603,440.4L1614.6,440.4M1594.5,459.8a5.800,5.800 0 0 0 11.600,0M1594.5,470.9a5.800,5.800 0 0 0 11.600,0M1594.5,481.9a5.800,5.800 0 0 0 11.600,0M1617.5,458.5H1620.8V461.7H1617.5zM1611,481.9a5.800,5.800 0 0 0 11.600,0M1601.4,499.3H1615.9V503.8H1601.4zM1605.8,498.5H1611.8V503.8H1605.8zM1634.8,401.3H1648V405.2H1634.8zM1638.4,400.5H1644.4V406H1638.4zM1640.2,408.4H1642.6V448.5H1640.2z"/>
<rect x="1635.6" y="437.200" width="11.600" height="6.400" fill="#fff"/>
<circle cx="1632.9" cy="456.8" r="4.1" fill="none"/>
<circle cx="1632.9" cy="467.9" r="4.1" fill="none"/>
<circle cx="1632.9" cy="478.9" r="4.1" fill="none"/>
<circle cx="1649.4" cy="478.9" r="4.1" fill="none"/>
<path d="M1635.6,440.4L1647.2,440.4M1627.1,459.8a5.800,5.800 0 0 0 11.600,0M1627.1,470.9a5.800,5.800 0 0 0 11.600,0M1627.1,481.9a5.800,5.800 0 0 0 11.600,0M1650.1,458.5H1653.4V461.7H1650.1zM1643.6,481.9a5.800,5.800 0 0 0 11.600,0M1634,499.3H1648.5V503.8H1634zM1638.4,498.5H1644.4V503.8H1638.4zM1667.6,401.3H1680.8V405.2H1667.6zM1671.2,400.5H1677.2V406H1671.2zM1673,408.4H1675.4V448.5H1673z"/>
<rect x="1668.4" y="437.200" width="11.600" height="6.400" fill="#fff"/>
<circle cx="1665.7" cy="456.8" r="4.1" fill="none"/>
<circle cx="1665.7" cy="467.9" r="4.1" fill="none"/>
<circle cx="1665.7" cy="478.9" r="4.1" fill="none"/>
<circle cx="1682.2" cy="478.9" r="4.1" fill="none"/>
<path d="M1668.4,440.4L1680,440.4M1659.9,459.8a5.800,5.800 0 0 0 11.600,0M1659.9,470.9a5.800,5.800 0 0 0 11.600,0M1659.9,481.9a5.800,5.800 0 0 0 11.600,0M1682.9,458.5H1686.2V461.7H1682.9zM1676.4,481.9a5.800,5.800 0 0 0 11.600,0M1666.8,499.3H1681.3V503.8H1666.8zM1671.2,498.5H1677.2V503.8H1671.2zM1700.2,401.3H1713.4V405.2H1700.2zM1703.8,400.5H1709.8V406H1703.8zM1705.6,408.4H1708V448.5H1705.6z"/>
<rect x="1701" y="437.200" width="11.600" height="6.400" fill="#fff"/>
<circle cx="1698.3" cy="456.8" r="4.1" fill="none"/>
<circle cx="1698.3" cy="467.9" r="4.1" fill="none"/>
<circle cx="1698.3" cy="478.9" r="4.1" fill="none"/>
<circle cx="1714.8" cy="478.9" r="4.1" fill="none"/>
<circle cx="1731.8" cy="440.8" r="4.1" fill="none"/>
<circle cx="1731.8" cy="451.5" r="4.1" fill="none"/>
<circle cx="1731.8" cy="462.2" r="4.1" fill="none"/>
<circle cx="1731.8" cy="472.9" r="4.1" fill="none"/>
<circle cx="1748.1" cy="429" r="4.1" fill="none"/>
<circle cx="1748.1" cy="440.3" r="4.1" fill="none"/>
<circle cx="1748.1" cy="451.5" r="4.1" fill="none"/>
<circle cx="1748.1" cy="462.2" r="4.1" fill="none"/>
<circle cx="1748.1" cy="472.9" r="4.1" fill="none"/>
<circle cx="1764.1" cy="409.7" r="4.1" fill="none"/>
<circle cx="1764.1" cy="469.4" r="4.1" fill="none"/>
<path d="M1701,440.4L1712.6,440.4M1692.5,459.8a5.800,5.800 0 0 0 11.600,0M1692.5,470.9a5.800,5.800 0 0 0 11.600,0M1692.5,481.9a5.800,5.800 0 0 0 11.600,0M1715.5,458.5H1718.8V461.7H1715.5zM1709,481.9a5.800,5.800 0 0 0 11.600,0M1699.4,499.3H1713.9V503.8H1699.4zM1703.8,498.5H1709.8V503.8H1703.8zM1727.2,499.3H1736.4V503.8H1727.2zM1729.8,498.5H1733.8V503.8H1729.8zM1743.7,499.3H1752.9V503.8H1743.7zM1746.3,498.5H1750.3V503.8H1746.3zM1726,433a5.800,5.800 0 0 0 11.600,0M1726,443.8a5.800,5.800 0 0 0 11.600,0M1726,454.5a5.800,5.800 0 0 0 11.600,0M1726,465.2a5.800,5.800 0 0 0 11.600,0M1726,475.9a5.800,5.800 0 0 0 11.600,0M1730,426.6L1731.6,425.4M1742.3,432a5.800,5.800 0 0 0 11.600,0M1742.3,443.3a5.800,5.800 0 0 0 11.600,0M1742.3,454.5a5.800,5.800 0 0 0 11.600,0M1742.3,465.2a5.800,5.800 0 0 0 11.600,0M1742.3,475.9a5.800,5.800 0 0 0 11.600,0M1758.3,412.7a5.800,5.800 0 0 0 11.600,0M1758.3,472.4a5.800,5.800 0 0 0 11.600,0M1758.5,424.7H1762.3V427.7H1758.5zM1758.5,430.6H1762.3V433.6H1758.5zM1765.3,424.7H1769.1V427.7H1765.3zM1765.3,430.6H1769.1V433.6H1765.3zM1760.4,450.4H1766.6V453.3H1760.4zM1761,461H1764V463.4H1761zM1764,460.3H1766V462H1764z"/>
<circle cx="1765.2" cy="496.8" r="5.5" fill="none" stroke-width="2"/>
<circle cx="1765.2" cy="496.8" r="2.6" fill="none" stroke-width="1.2"/>
<path d="M1567.7,456.5V488.8" stroke-width="2.500" stroke-dasharray="1.300 0.500" stroke="#222"/>
<path d="M1579.9,456.5V488.8" stroke-width="2.500" stroke-dasharray="1.300 0.500" stroke="#222"/>
<path d="M1588,456.5V488.8" stroke-width="2.500" stroke-dasharray="1.300 0.500" stroke="#222"/>
<path d="M1608.8,456.5V488" stroke-width="2.500" stroke-dasharray="1.300 0.500" stroke="#222"/>
<path d="M1641.4,456.5V488" stroke-width="2.500" stroke-dasharray="1.300 0.500" stroke="#222"/>
<path d="M1674.2,456.5V488" stroke-width="2.500" stroke-dasharray="1.300 0.500" stroke="#222"/>
<path d="M1706.8,456.5V488" stroke-width="2.500" stroke-dasharray="1.300 0.500" stroke="#222"/>
<path d="M1538.9,510.3H1540.8V543.1H1538.9z"/>
<rect x="1534.4" y="527.800" width="11" height="5.600" fill="#fff"/>
<ellipse cx="1618.3" cy="526.500" rx="17.400" ry="15.300" stroke-width="1.200"/><ellipse cx="1618.3" cy="526.300" rx="10.500" ry="9" stroke-width="1.200"/>
<rect x="1613.5" y="541.300" width="9.400" height="2.600" fill="#666"/>
<path d="M1534.4,530.6L1545.4,530.6M1561.2,513.6H1568V519.2H1561.2zM1561.2,524.4H1568V527.8H1561.2zM1561.2,532.5H1568V535.8H1561.2zM1572.3,513.6H1579.1V519.2H1572.3zM1572.3,524.4H1579.1V527.8H1572.3zM1572.3,532.5H1579.1V535.8H1572.3zM1583.3,513.6H1590.2V519.2H1583.3zM1583.3,524.4H1590.2V527.8H1583.3zM1583.3,532.5H1590.2V535.8H1583.3zM1553.4,544.6H1558.4V548.8H1553.4zM1559,544.6H1564V548.8H1559zM1564.6,544.6H1569.6V548.8H1564.6zM1570.2,544.6H1575.2V548.8H1570.2zM1575.8,544.6H1580.8V548.8H1575.8zM1581.4,544.6H1586.4V548.8H1581.4zM1587,544.6H1592V548.8H1587zM1592.6,544.6H1597.6V548.8H1592.6zM1528.4,552H1551.8V556.3H1528.4zM1528.4,561.5H1551.8V565.7H1528.4z"/>
<path d="M1528.4,557.6L1551.8,557.6M1528.4,560.4L1551.8,560.4" stroke-width="1.6"/>
<path d="M1559,551.500H1614.7q2,0 2,2v9.200q0,2 -2,2H1559q-2,0 -2,-2v-9.200q0,-2 2,-2zM1561.5,552.3H1602.4V563.9H1561.5zM1606.6,558.500l3,-3.500l3,3.500zM1606.6,560h6v1.500h-6zM1624,551.5H1638.7V554.4H1624zM1624,561.5H1638.7V564.7H1624zM1624.8,556H1629.3V559.9H1624.8zM1633.7,556H1638.2V559.9H1633.7z"/>
<path d="M1685.8,510.3H1687.7V543.1H1685.8z"/>
<rect x="1681.3" y="527.800" width="11" height="5.600" fill="#fff"/>
<ellipse cx="1765.2" cy="526.500" rx="17.400" ry="15.300" stroke-width="1.200"/><ellipse cx="1765.2" cy="526.300" rx="10.500" ry="9" stroke-width="1.200"/>
<rect x="1760.4" y="541.300" width="9.400" height="2.600" fill="#666"/>
<path d="M1681.3,530.6L1692.3,530.6M1708.1,513.6H1714.9V519.2H1708.1zM1708.1,524.4H1714.9V527.8H1708.1zM1708.1,532.5H1714.9V535.8H1708.1zM1719.2,513.6H1726V519.2H1719.2zM1719.2,524.4H1726V527.8H1719.2zM1719.2,532.5H1726V535.8H1719.2zM1730.2,513.6H1737.1V519.2H1730.2zM1730.2,524.4H1737.1V527.8H1730.2zM1730.2,532.5H1737.1V535.8H1730.2zM1700.3,544.6H1705.3V548.8H1700.3zM1705.9,544.6H1710.9V548.8H1705.9zM1711.5,544.6H1716.5V548.8H1711.5zM1717.1,544.6H1722.1V548.8H1717.1zM1722.7,544.6H1727.7V548.8H1722.7zM1728.3,544.6H1733.3V548.8H1728.3zM1733.9,544.6H1738.9V548.8H1733.9zM1739.5,544.6H1744.5V548.8H1739.5zM1675.3,552H1698.7V556.3H1675.3zM1675.3,561.5H1698.7V565.7H1675.3z"/>
<path d="M1675.3,557.6L1698.7,557.6M1675.3,560.4L1698.7,560.4" stroke-width="1.6"/>
<path d="M1705.9,551.500H1761.6q2,0 2,2v9.200q0,2 -2,2H1705.9q-2,0 -2,-2v-9.200q0,-2 2,-2zM1708.4,552.3H1749.3V563.9H1708.4zM1753.5,558.500l3,-3.500l3,3.500zM1753.5,560h6v1.500h-6zM1770.9,551.5H1785.6V554.4H1770.9zM1770.9,561.5H1785.6V564.7H1770.9zM1771.7,556H1776.2V559.9H1771.7zM1780.6,556H1785.1V559.9H1780.6z"/>
<path d="M1648.200,548.300V521.400a9.750,9.750 0 0 1 19.500,0V548.300zM1648.2,521.6L1667.7,521.6M1648.2,524L1667.7,524M1650.9,526H1654.5V529.6H1650.9zM1660.6,526H1664.2V529.6H1660.6zM1650.9,532.4H1654.5V536H1650.9zM1660.6,532.4H1664.2V536H1660.6z"/>
<rect x="1648.200" y="538.600" width="19.500" height="9.700" fill="#555"/><rect x="1655" y="539.500" width="2" height="8" fill="#fff" stroke="none"/><rect x="1659.500" y="539.500" width="2" height="8" fill="#fff" stroke="none"/>
</g>
<g transform="translate(1690,185) scale(0.166667)" stroke-linejoin="round"><g fill="#fff" stroke="#fff" stroke-width="40"><path d="M420,250L425,135L455,165L515,62L530,115L640,38L652,78L702,58L722,108L772,128L778,178L803,198L810,300Q800,450 700,510Q580,560 470,500Q380,420 395,300z"/><path d="M480,560L740,560L840,560L820,650L700,820L790,1040L740,1050L580,850L450,940L430,990L330,1020L390,920L470,810L500,640L400,700L360,660z"/><path d="M150,755L1000,435"/><path d="M950,285Q970,270 990,300Q1060,350 1100,340Q1125,380 1105,440Q1095,480 1090,570Q1075,580 1060,545Q1040,520 1030,480Q1000,440 990,400Q985,340 950,285z"/><path d="M800,245Q860,215 945,290L885,380L810,295z"/></g><path d="M480,800Q395,830 385,925L450,945Q475,880 570,860L690,960L750,940Q735,890 700,810z" fill="#1e86d6" stroke="#173f6b" stroke-width="5"/><path d="M385,920L452,944L432,990L328,1022Q318,1002 385,920z" fill="#1a7fd0" stroke="#173f6b" stroke-width="5"/><path d="M688,957L752,938L792,1040L742,1052z" fill="#1a7fd0" stroke="#173f6b" stroke-width="5"/><path d="M383,912L455,936L448,962L376,936z" fill="#4a4f57"/><path d="M684,950L748,928L758,952L694,976z" fill="#4a4f57"/><path d="M500,556Q418,592 352,668L402,708Q470,652 522,642z" fill="#1f8be0" stroke="#173f6b" stroke-width="5"/><path d="M485,565Q600,530 735,565L705,825Q590,860 468,808z" fill="#1f8be0" stroke="#173f6b" stroke-width="5"/><path d="M596,600Q590,700 606,812L622,812Q610,700 618,600z" fill="#7b8189"/><path d="M468,795Q585,850 705,812L702,838Q585,872 466,815z" fill="#6f757d"/><path d="M700,560L762,608L790,548L848,562L822,652Q770,685 702,640z" fill="#1f8be0" stroke="#173f6b" stroke-width="5"/><path d="M150,755L1000,435" stroke="#7d4318" stroke-width="32" stroke-linecap="round" fill="none"/><path d="M151,753L999,433" stroke="#a9682f" stroke-width="22" stroke-linecap="round" fill="none"/><path d="M152,748L998,428" stroke="#c98f52" stroke-width="7" stroke-linecap="round" fill="none"/><ellipse cx="348" cy="698" rx="42" ry="36" fill="#f6c48f" stroke="#5b3a1e" stroke-width="5"/><ellipse cx="815" cy="512" rx="40" ry="34" fill="#f6c48f" stroke="#5b3a1e" stroke-width="5"/><path d="M330,668l10,58M352,664l10,60M374,668l8,50" stroke="#8a5a32" stroke-width="4" fill="none"/><path d="M798,482l8,56M820,480l8,58M840,488l6,44" stroke="#8a5a32" stroke-width="4" fill="none"/><path d="M950,285Q970,270 990,300Q1060,350 1100,340Q1125,380 1105,440Q1095,480 1090,570Q1075,580 1060,545Q1040,520 1030,480Q1000,440 990,400Q985,340 950,285z" fill="#f4c21a" stroke="#c98a0c" stroke-width="4"/><path d="M990,400Q1010,450 1040,470Q1050,520 1075,572Q1060,560 1050,530Q1035,510 1030,480Q1000,440 990,400z" fill="#dd9c10"/><path d="M985,320Q1040,370 1085,365Q1095,400 1080,430Q1050,380 985,320z" fill="#f9d94a"/><ellipse cx="806" cy="385" rx="20" ry="30" fill="#f3b67e" stroke="#6b4424" stroke-width="4"/><path d="M395,300Q380,420 470,500Q580,560 700,510Q800,450 810,300z" fill="#f6c48f" stroke="#6b4424" stroke-width="4"/><path d="M768,320L802,318L798,415L770,400z" fill="#f08a12"/><path d="M420,250L425,135L455,165L515,62L530,115L640,38L652,78L702,58L722,108L772,128L778,178L803,198L790,250z" fill="#f7b711" stroke="#c77a08" stroke-width="4"/><path d="M470,240L500,150L520,200L580,110L590,180L660,100L655,190L720,140L700,220L760,190L740,245z" fill="#f18d0b"/><path d="M520,240L560,170L570,215L630,150L625,220L690,180L670,240z" fill="#f9cf2d"/><ellipse cx="495" cy="356" rx="52" ry="38" fill="#fff" stroke="#33251a" stroke-width="6"/><ellipse cx="662" cy="360" rx="52" ry="38" fill="#fff" stroke="#33251a" stroke-width="6"/><circle cx="510" cy="354" r="23" fill="#4a9be0"/><circle cx="510" cy="354" r="10" fill="#1a2a44"/><circle cx="648" cy="360" r="23" fill="#4a9be0"/><circle cx="648" cy="360" r="10" fill="#1a2a44"/><path d="M392,240Q600,275 802,235L808,302Q600,366 384,302z" fill="#4b4b4d" stroke="#2a2a2c" stroke-width="4"/><path d="M800,245Q860,215 945,290Q880,252 830,278z" fill="#3f3f41"/><path d="M818,268Q882,290 886,382Q860,312 808,298z" fill="#3f3f41"/><path d="M545,400Q540,430 575,432" stroke="#a06a3c" stroke-width="6" fill="none"/><path d="M500,458Q580,500 662,445" stroke="#4a2d18" stroke-width="7" fill="none" stroke-linecap="round"/></g>
<defs><linearGradient id="lgt" gradientUnits="userSpaceOnUse" x1="1700" y1="352" x2="1720" y2="404"><stop offset="0" stop-color="#2ba6ec"/><stop offset="1" stop-color="#1870cb"/></linearGradient></defs><text style="font-family:&quot;Liberation Sans&quot;,sans-serif;font-weight:bold;fill:url(#lgt);stroke:#fff;stroke-width:7px;paint-order:stroke;stroke-linejoin:round"><tspan x="1676" y="387" rotate="-8" style="font-size:47px" textLength="31" lengthAdjust="spacingAndGlyphs">P</tspan><tspan x="1700.500" y="397.500" dy="0 0.800 1.500 0.800 0.800" rotate="4" style="font-size:46px" textLength="77" lengthAdjust="spacingAndGlyphs">islik</tspan><tspan x="1781.500" y="403" rotate="-7" style="font-size:45px" textLength="30" lengthAdjust="spacingAndGlyphs">M</tspan><tspan x="1821" y="402" style="font-size:17px" textLength="7" lengthAdjust="spacingAndGlyphs">i</tspan><tspan x="1833" y="402.500" rotate="-14" style="font-size:27px" textLength="31" lengthAdjust="spacingAndGlyphs">m</tspan><tspan x="1864.500" y="394.500" rotate="-26" style="font-size:28px" textLength="23" lengthAdjust="spacingAndGlyphs">a</tspan><tspan x="1890.500" y="385.500" rotate="-32" style="font-size:32px" textLength="21" lengthAdjust="spacingAndGlyphs">r</tspan></text>
<defs><linearGradient id="dwb" x1="0" y1="0" x2="0" y2="1"><stop offset="0" stop-color="#1b4a7e"/><stop offset="1" stop-color="#34608f"/></linearGradient><linearGradient id="dwy" x1="0" y1="0" x2="1" y2="0"><stop offset="0" stop-color="#f3e375"/><stop offset="0.120" stop-color="#f9f0a6"/><stop offset="0.450" stop-color="#f3d420"/><stop offset="0.800" stop-color="#f4db3c"/><stop offset="1" stop-color="#f6e36a"/></linearGradient><clipPath id="dwc"><path d="M87,769H142.500L176,801V886H87z"/></clipPath></defs><g clip-path="url(#dwc)"><rect x="87" y="769" width="89" height="117" fill="url(#dwy)"/><path d="M87,769H176V850.600L113.750,831.200H87z" fill="url(#dwb)"/><rect x="110.600" y="769" width="3.400" height="62.500" fill="#fff"/><rect x="87" y="805.600" width="89" height="3.200" fill="#fff"/><rect x="102.800" y="797.300" width="19.900" height="19.900" fill="#24558a" stroke="#fff" stroke-width="2.600"/><rect x="111.200" y="806" width="2.800" height="2.400" fill="#fff"/></g><path d="M142.500,769Q152,776 150.500,790Q163,791 176,801z" fill="#2d5d8f"/><path d="M142.500,769Q152,776 150.500,790Q163,791 176,801" fill="none" stroke="#17406e" stroke-width="0.800"/><text x="110.600" y="877.500" style="font-size:28px;font-weight:bold;fill:#000;stroke:#000;stroke-width:0.5px" textLength="62.500" lengthAdjust="spacingAndGlyphs">.dwg</text>
<defs><linearGradient id="dlg" x1="0" y1="0" x2="0" y2="1"><stop offset="0" stop-color="#f01b24"/><stop offset="0.450" stop-color="#e61c26"/><stop offset="1" stop-color="#c0232c"/></linearGradient><radialGradient id="dlc" cx="0.350" cy="0.300" r="0.800"><stop offset="0" stop-color="#d4181f"/><stop offset="0.600" stop-color="#a91117"/><stop offset="1" stop-color="#6d080c"/></radialGradient><linearGradient id="dle" x1="0" y1="0" x2="1" y2="0"><stop offset="0.350" stop-color="#8a0c10" stop-opacity="0"/><stop offset="1" stop-color="#7a0a0e"/></linearGradient></defs><rect x="12" y="904.300" width="232.500" height="84" rx="42" fill="url(#dle)"/><rect x="11.500" y="905.500" width="232.500" height="83.500" rx="41.750" fill="url(#dlg)"/><circle cx="201.800" cy="947.100" r="25.500" fill="#8a0c10"/><circle cx="201.800" cy="947.100" r="24.500" fill="url(#dlc)"/><path d="M195,930H207.900V947.100H214.600L201.500,965.400L188.200,947.100H195z" fill="#fff"/><text x="31" y="959.700" style="font-size:30.300px;font-weight:bold;fill:#fff;stroke:#fff;stroke-width:0.9px" textLength="135" lengthAdjust="spacingAndGlyphs">DOWNLOAD</text>
<rect x="0" y="1007" width="1920" height="33" fill="#222933"/><rect x="0" y="1007" width="1920" height="3.500" fill="#3b4453"/>
<rect x="0" y="1040" width="1920" height="40" fill="#1e1f24"/>
<path d="M99.400,1034.500l9.300,-23.300h68.800l-9.500,23.300z" fill="#2e3743"/>
<rect x="16" y="1017.1" width="16" height="2" fill="#e6e9ee"/>
<rect x="16" y="1022.1" width="16" height="2" fill="#e6e9ee"/>
<rect x="16" y="1027.1" width="16" height="2" fill="#e6e9ee"/>
<path d="M43,1031l5,-15" stroke="#4a5260" stroke-width="1"/>
<path d="M213,1031l5,-15" stroke="#4a5260" stroke-width="1"/>
<text x="58" y="1028" class="t" textLength="34" lengthAdjust="spacingAndGlyphs">Model</text>
<text x="116" y="1028" class="t" style="font-weight:bold;fill:#fff" textLength="43" lengthAdjust="spacingAndGlyphs">Layout1</text>
<path d="M186,1023.500h14M193,1016.500v14" stroke="#e6e9ee" stroke-width="1.800"/>
<rect x="1458" y="1013" width="40" height="23" fill="#323a47"/>
<text x="1461" y="1029" class="t" textLength="34" lengthAdjust="spacingAndGlyphs" style="font-size:12px">PAPER</text>
<rect x="1501" y="1013" width="170" height="23" fill="#323a47"/><rect x="1674" y="1013" width="71" height="23" fill="#323a47"/><rect x="1748" y="1013" width="42" height="23" fill="#323a47"/>
<rect x="1791" y="1013" width="23" height="23" fill="#323a47"/>
<rect x="1816" y="1013" width="23" height="23" fill="#323a47"/>
<rect x="1842" y="1013" width="23" height="23" fill="#323a47"/>
<rect x="1868" y="1013" width="23" height="23" fill="#323a47"/>
<rect x="1894" y="1013" width="23" height="23" fill="#323a47"/>
<rect x="1502" y="1014" width="22" height="22" fill="#5b8ed2"/>
<rect x="1607" y="1014" width="22" height="22" fill="#5b8ed2"/>
<rect x="1631" y="1014" width="22" height="22" fill="#5b8ed2"/>
<path d="M1507,1016v16h12M1507,1027h5v5" stroke="#e3e6ea" stroke-width="1.300" fill="none"/>
<circle cx="1535" cy="1025" r="6" fill="none" stroke="#e3e6ea" stroke-width="1.200"/><path d="M1535,1025h9M1535,1025l7,-8" stroke="#e3e6ea" stroke-width="1.200"/>
<path d="M1554.0,1023.25h6l-3.0,3.5z" fill="#d0d4da"/>
<path d="M1577,1016v17" stroke="#3fc48d" stroke-width="1.200"/><path d="M1571,1018l12,14" stroke="#e0566b" stroke-width="1.200"/><circle cx="1577" cy="1025" r="1.600" fill="#e3e6ea"/>
<path d="M1594.0,1023.25h6l-3.0,3.5z" fill="#d0d4da"/>
<path d="M1610,1032h14M1610,1032l12,-14" stroke="#fff" stroke-width="1.300" fill="none"/><rect x="1615" y="1024" width="3" height="3" fill="#fff"/>
<rect x="1637" y="1019" width="12" height="13" fill="none" stroke="#fff" stroke-width="1.300"/><rect x="1635" y="1017" width="4" height="4" fill="#5b8ed2" stroke="#fff" stroke-width="1"/>
<path d="M1659.0,1023.25h6l-3.0,3.5z" fill="#d0d4da"/>
<rect x="1679" y="1019" width="13" height="13" fill="none" stroke="#e3e6ea" stroke-width="1.200" stroke-dasharray="3 2"/><rect x="1683" y="1023" width="6" height="6" fill="none" stroke="#e3e6ea" stroke-width="1.100"/><path d="M1677,1017l4,4M1677,1017h3M1677,1017v3" stroke="#e3e6ea" stroke-width="1"/>
<path d="M1709,1016l-7,16l7,-5l7,5z" fill="#e3e6ea"/>
<path d="M1733,1016l-7,16l7,-5l7,5z" fill="#e3e6ea"/>
<circle cx="1716" cy="1019" r="2" fill="none" stroke="#e3e6ea" stroke-width="1"/><path d="M1740,1016l-3,4h2l-2,4" stroke="#e3e6ea" stroke-width="1" fill="none"/>
<path d="M1763.0,1025.0L1766.5,1025.0" stroke="#e3e6ea" stroke-width="3"/><path d="M1761.8,1027.8L1764.3,1030.3" stroke="#e3e6ea" stroke-width="3"/><path d="M1759.0,1029.0L1759.0,1032.5" stroke="#e3e6ea" stroke-width="3"/><path d="M1756.2,1027.8L1753.7,1030.3" stroke="#e3e6ea" stroke-width="3"/><path d="M1755.0,1025.0L1751.5,1025.0" stroke="#e3e6ea" stroke-width="3"/><path d="M1756.2,1022.2L1753.7,1019.7" stroke="#e3e6ea" stroke-width="3"/><path d="M1759.0,1021.0L1759.0,1017.5" stroke="#e3e6ea" stroke-width="3"/><path d="M1761.8,1022.2L1764.3,1019.7" stroke="#e3e6ea" stroke-width="3"/><circle cx="1759" cy="1025" r="4.200" fill="none" stroke="#e3e6ea" stroke-width="2.600"/>
<path d="M1777.0,1023.25h6l-3.0,3.5z" fill="#d0d4da"/>
<path d="M1794,1025h15M1801.500,1017.500v15" stroke="#e3e6ea" stroke-width="1.600"/>
<rect x="1820.500" y="1017.500" width="5" height="5" fill="none" stroke="#e3e6ea" stroke-width="1"/><circle cx="1832.500" cy="1024" r="2.800" fill="none" stroke="#e3e6ea" stroke-width="1"/><path d="M1826,1027l3.500,5.500h-7z" fill="none" stroke="#e3e6ea" stroke-width="1"/>
<rect x="1846" y="1027" width="7" height="6" fill="#f2b632"/><path d="M1849,1016v11M1846,1019h12" stroke="#6cb6ee" stroke-width="1.300"/><path d="M1852,1020l6,-2l2,7l-6,4z" fill="#3f7fc4"/><path d="M1851,1029l3,3l6,-6" stroke="#4fc46a" stroke-width="1.800" fill="none"/>
<rect x="1872.500" y="1019.500" width="15" height="11" fill="none" stroke="#e3e6ea" stroke-width="1.100"/><path d="M1876,1027l3,-3M1881,1025l3,-3M1876,1027v-2.500M1876,1027h2.500M1884,1022v2.500M1884,1022h-2.500" stroke="#e3e6ea" stroke-width="1"/>
<rect x="1898" y="1018.6" width="16" height="1.800" fill="#e3e6ea"/>
<rect x="1898" y="1024.1" width="16" height="1.800" fill="#e3e6ea"/>
<rect x="1898" y="1029.6" width="16" height="1.800" fill="#e3e6ea"/>
<path d="M16,1054.200l6.600,-0.900v6.200h-6.600zM23.600,1053.100l8.600,-1.200v7.600h-8.600zM16,1060.500h6.600v6.200l-6.600,-0.900zM23.600,1060.500h8.600v7.600l-8.600,-1.200z" fill="#fff"/>
<rect x="48" y="1040.500" width="288" height="39.500" fill="#f2f2f2"/>
<circle cx="70" cy="1057" r="5" fill="none" stroke="#222" stroke-width="1.400"/><path d="M66.500,1061l-6,6.500" stroke="#222" stroke-width="1.600"/>
<text x="88" y="1066" style="font-size:15px;fill:#3a3a3a" textLength="23" lengthAdjust="spacingAndGlyphs">Ara</text>
<defs><clipPath id="lsc"><path d="M266,1080Q255,1068 258,1058Q262,1044 284,1042Q296,1040.500 310,1042Q332,1044 334.500,1058Q337,1068 328,1080z"/></clipPath><linearGradient id="lsky" x1="0" y1="0" x2="1" y2="0"><stop offset="0" stop-color="#f6e3a8"/><stop offset="0.500" stop-color="#f8d9c9"/><stop offset="1" stop-color="#bcdcf2"/></linearGradient></defs><g clip-path="url(#lsc)"><rect x="255" y="1040" width="82" height="40" fill="#4e8f2c"/><rect x="255" y="1040" width="82" height="10" fill="url(#lsky)"/><path d="M256,1052q8,-5 16,-3q6,-4 14,-1q8,-4 16,-1q8,-3 16,0q8,-2 18,4v8h-80z" fill="#2f6f1f"/><path d="M256,1056q20,-5 40,-3q20,-2 40,4v8h-80z" fill="#6fa82e"/><path d="M258,1062q14,-3 24,1q-10,4 -24,4zM312,1060q12,-2 22,2v5q-12,-1 -22,-3z" fill="#9bc23c"/><path d="M284,1056q12,-1 20,1q6,2 -2,4q-10,2 -4,5q10,3 4,7q-6,4 4,7h-36q4,-5 12,-7q8,-3 0,-6q-10,-3 2,-6q6,-2 -4,-5z" fill="#8fc4ea"/><path d="M262,1072q14,-3 30,0q16,-3 38,1v7h-68z" fill="#5b9fd6"/><path d="M268,1076q8,-3 16,0zM300,1073q10,-3 20,0q-8,3 -20,0zM306,1078q8,-2 14,0z" fill="#2a5e22"/></g>
<path d="M363,1060.1L352.43,1054.00A12.2,12.2 0 0 1 373.57,1054.00z" fill="#ea4335"/><path d="M363,1060.1L373.57,1054.00A12.2,12.2 0 0 1 363.00,1072.30z" fill="#fbbc05"/><path d="M363,1060.1L363.00,1072.30A12.2,12.2 0 0 1 352.43,1054.00z" fill="#34a853"/>
<path d="M373.57,1054.00L368.2,1057.1L363,1066.1L363.00,1072.30A12.2,12.2 0 0 0 373.57,1054.00z" fill="#fbbc05"/><path d="M352.43,1054.00L357.8,1057.1h10.400L373.57,1054.00A12.2,12.2 0 0 0 352.43,1054.00z" fill="#ea4335"/>
<circle cx="363" cy="1060.1" r="5.400" fill="#fff"/><circle cx="363" cy="1060.1" r="4.300" fill="#4285f4"/>
<rect x="343" y="1078" width="40" height="2" fill="#8cc4f0"/>
<rect x="387.600" y="1040" width="44.700" height="40" fill="#3b3c41"/><rect x="387.600" y="1078" width="44.700" height="2" fill="#8cc4f0"/>
<path d="M400.500,1051.500l3.500,-4h18v21l-3.500,4h-18z" fill="#b40f36"/><path d="M404,1047.500h18v21h-18z" fill="#e3184a"/><path d="M400.500,1051.500l3.500,-4v21l-3.500,4z" fill="#9a0c2c"/><path d="M400.500,1065h18l3.500,-3.500v7l-3.500,4h-18z" fill="#a50f35"/><text x="413" y="1062" text-anchor="middle" style="font-size:14px;font-weight:bold;fill:#fff">A</text><text x="410" y="1071" text-anchor="middle" style="font-size:5px;font-weight:bold;fill:#fff">CAD</text>
<rect x="440.800" y="1078" width="40.200" height="2" fill="#8cc4f0"/>
<defs><linearGradient id="npg" x1="0" y1="0" x2="1" y2="1"><stop offset="0" stop-color="#d9f1f1"/><stop offset="1" stop-color="#6fb9c2"/></linearGradient></defs><path d="M455,1050.500l12,-1.500l4.500,19l-17,3.500l-6,-6z" fill="url(#npg)"/><path d="M448.500,1065.500l6.500,-15l-0.500,21z" fill="#4f9fae"/><path d="M467,1049l4.500,19l-2.500,0.500l-3,-19z" fill="#e9e6dc"/><path d="M454.500,1071.500l17,-3.500l0.500,1.500l-16,3.500z" fill="#8a9aa0"/>
<path d="M1758.500,1063l5.500,-5.500l5.500,5.500" stroke="#fff" stroke-width="1.300" fill="none"/>
<path d="M1782,1057.500h3l4,-3.500v12l-4,-3.500h-3z" fill="none" stroke="#fff" stroke-width="1.100"/><path d="M1791.500,1057q2,3 0,6M1794,1055q3.500,5 0,10" stroke="#fff" stroke-width="1" fill="none"/>
<text x="1833.500" y="1055" text-anchor="middle" style="font-size:12px;fill:#fff" textLength="27" lengthAdjust="spacingAndGlyphs">05:09</text>
<text x="1834" y="1073" text-anchor="middle" style="font-size:12px;fill:#fff" textLength="54" lengthAdjust="spacingAndGlyphs">22.04.2026</text>
<path d="M1879.500,1052.500h16v12h-6l-2.500,3l-2.500,-3h-5z" fill="none" stroke="#fff" stroke-width="1.200"/>
<rect x="1915" y="1040" width="1" height="40" fill="#5a5d63"/>
</svg>
</body></html>
